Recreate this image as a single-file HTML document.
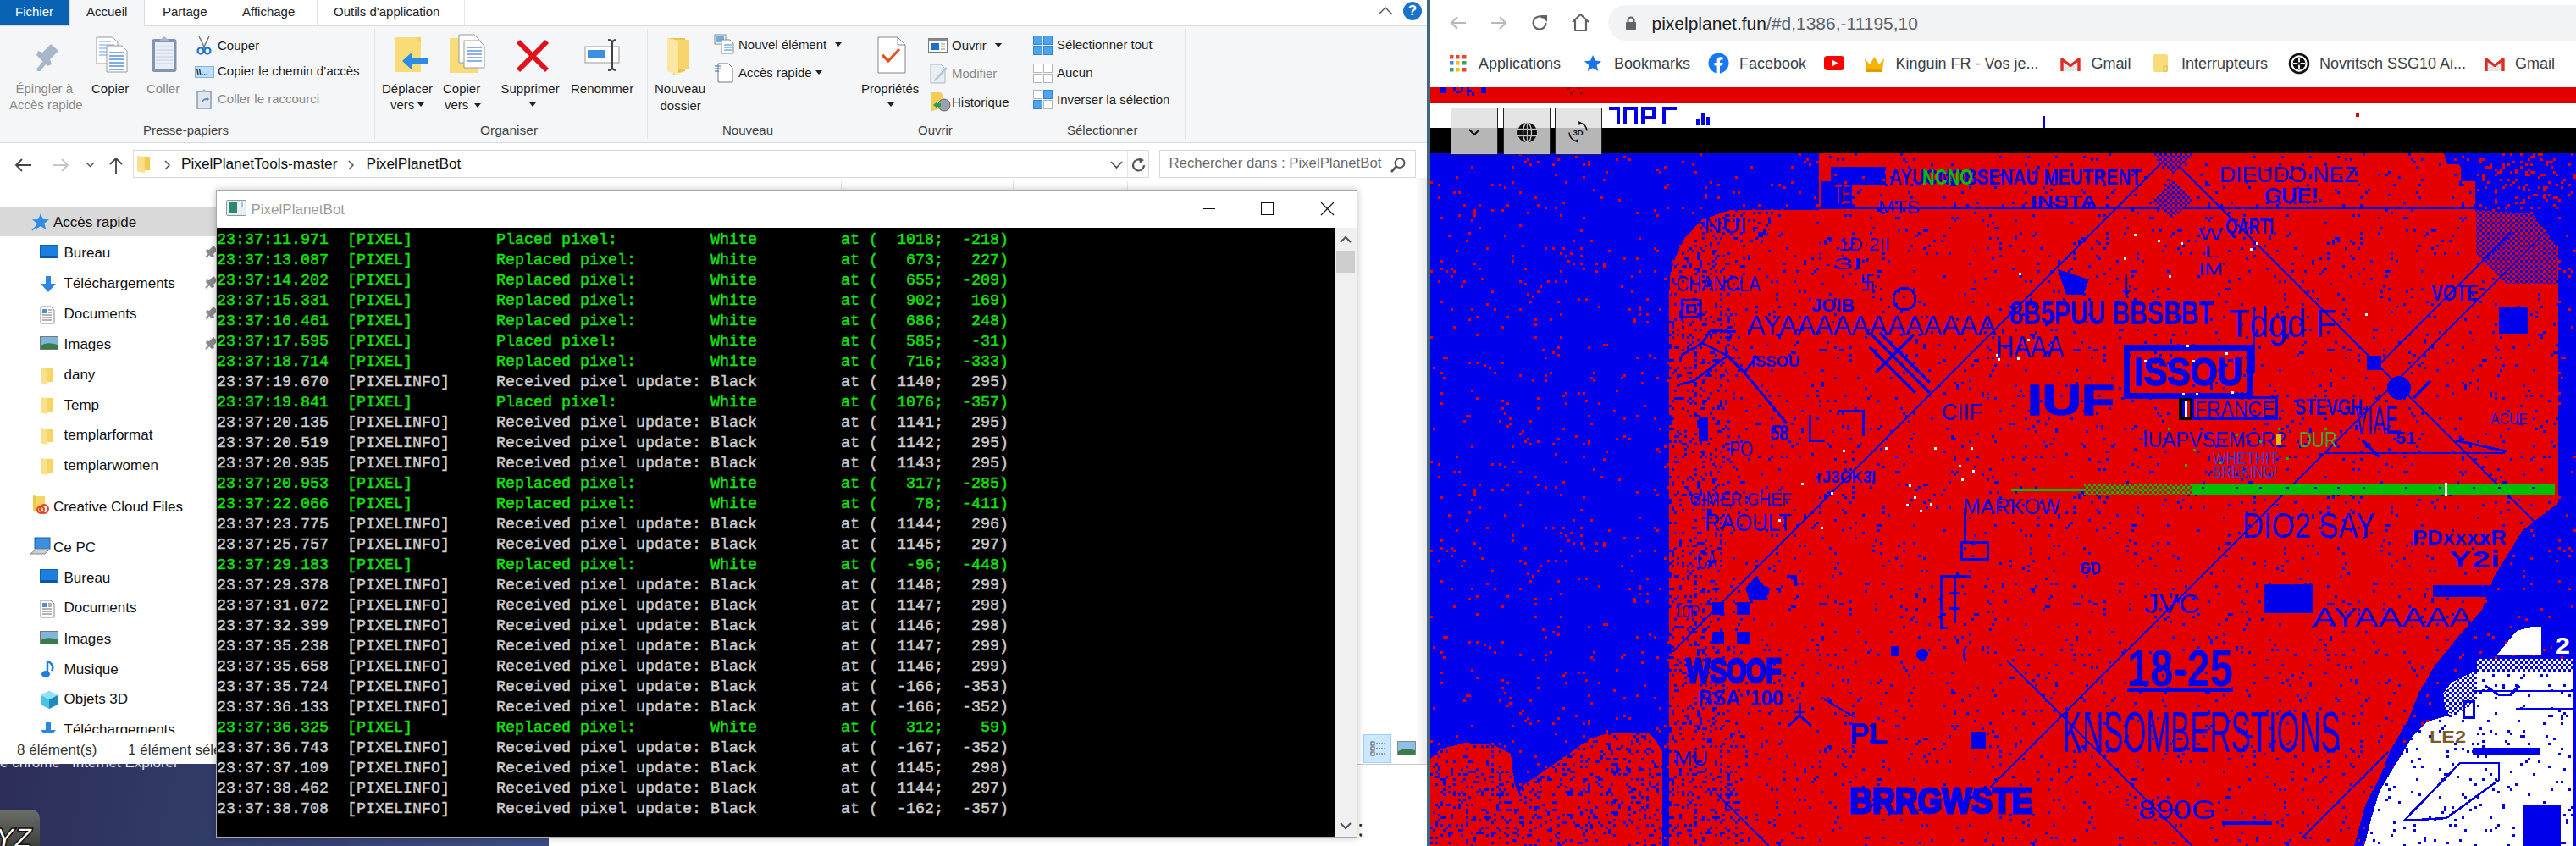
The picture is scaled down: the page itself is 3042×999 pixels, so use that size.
<!DOCTYPE html><html><head><meta charset="utf-8"><style>
html,body{margin:0;padding:0}
body{width:3042px;height:999px;position:relative;overflow:hidden;background:#1c2b48;font-family:"Liberation Sans",sans-serif}
.a{position:absolute}
.t{position:absolute;white-space:nowrap;line-height:1}
#con{position:absolute;left:256px;top:269px;width:1320px;height:719px;background:#000;font-family:"Liberation Mono",monospace;font-size:18.33px;line-height:24px;white-space:pre;padding-top:3px;box-sizing:border-box;overflow:hidden}
#con .g{color:#13e50e;-webkit-text-stroke:0.45px #13e50e}
#con .w{color:#cccccc;-webkit-text-stroke:0.45px #cccccc}
</style></head><body>

<div class="a" style="left:0;top:880px;width:700px;height:119px;background:linear-gradient(100deg,#2c2e58,#333f6c 45%,#3a4a7c 85%,#3b4c80)"></div>
<div class="t" style="left:0.0px;top:891.6px;font-size:17px;color:#dfe3ea;">e chrome&#160;&#160;&#160;Internet Explorer</div>
<div class="a" style="left:0;top:0;width:1685px;height:902px;background:#fff"></div>
<div class="a" style="left:0;top:0;width:82px;height:30px;background:#0a62b4"></div>
<div class="t" style="left:18.0px;top:5.9px;font-size:15px;color:#fff;">Fichier</div>
<div class="a" style="left:82px;top:0;width:88px;height:31px;background:#f5f6f7;border-right:1px solid #dadbdc"></div>
<div class="t" style="left:102.0px;top:5.9px;font-size:15px;color:#222;">Accueil</div>
<div class="t" style="left:192.0px;top:5.9px;font-size:15px;color:#222;">Partage</div>
<div class="t" style="left:286.0px;top:5.9px;font-size:15px;color:#222;">Affichage</div>
<div class="a" style="left:374px;top:0;width:1px;height:29px;background:#e4e4e4"></div>
<div class="t" style="left:394.0px;top:5.9px;font-size:15px;color:#222;">Outils d'application</div>
<div class="a" style="left:548px;top:0;width:1px;height:29px;background:#e4e4e4"></div>
<div class="a" style="left:0;top:30px;width:1685px;height:139px;background:#f5f6f7;border-top:1px solid #dadbdc;border-bottom:1px solid #dadbdc;box-sizing:border-box"></div>
<div class="a" style="left:82px;top:29px;width:88px;height:3px;background:#f5f6f7"></div>
<div class="a" style="left:82px;top:0;width:1px;height:31px;background:#dadbdc"></div>
<svg class="a" style="left:1626px;top:6px" width="20" height="14"><polyline points="2,11 10,3 18,11" fill="none" stroke="#555" stroke-width="1.4"/></svg>
<div class="a" style="left:1657px;top:2px;width:22px;height:22px;border-radius:50%;background:#1a73c9;color:#fff;font-size:17px;font-weight:bold;text-align:center;line-height:22px">?</div>
<div class="a" style="left:442px;top:34px;width:1px;height:130px;background:#e2e3e4"></div>
<div class="a" style="left:764px;top:34px;width:1px;height:130px;background:#e2e3e4"></div>
<div class="a" style="left:1008px;top:34px;width:1px;height:130px;background:#e2e3e4"></div>
<div class="a" style="left:1210px;top:34px;width:1px;height:130px;background:#e2e3e4"></div>
<div class="a" style="left:1399px;top:34px;width:1px;height:130px;background:#e2e3e4"></div>
<div class="a" style="left:584px;top:40px;width:1px;height:92px;background:#e2e3e4"></div>
<svg class="a" style="left:36px;top:48px" width="36" height="36"><path d="M10 34 L18 24" stroke="#a7b6c9" stroke-width="5" stroke-linecap="round"/><path d="M14 14 L24 4 L33 12 L23 22 L25 28 L20 30 L7 17 L9 12 Z" fill="#a7b6c9"/></svg>
<div class="t" style="left:18.5px;top:96.9px;font-size:15px;color:#8a8a8a;">Épingler à</div>
<div class="t" style="left:11.0px;top:116.4px;font-size:15px;color:#8a8a8a;">Accès rapide</div>
<svg class="a" style="left:113px;top:43px" width="38" height="44"><path d="M1 1 H20 L26 7 V32 H1 Z" fill="#fff" stroke="#9a9a9a"/><g stroke="#8fb4ea" stroke-width="1.3"><line x1="4" y1="6" x2="18" y2="6"/><line x1="4" y1="10" x2="22" y2="10"/><line x1="4" y1="14" x2="22" y2="14"/><line x1="4" y1="18" x2="22" y2="18"/><line x1="4" y1="22" x2="22" y2="22"/></g><path d="M13 11 H31 L37 17 V42 H13 Z" fill="#fff" stroke="#9a9a9a"/><g stroke="#3a7ee0" stroke-width="1.3"><line x1="16" y1="19" x2="34" y2="19"/><line x1="16" y1="23" x2="34" y2="23"/><line x1="16" y1="27" x2="34" y2="27"/><line x1="16" y1="31" x2="34" y2="31"/><line x1="16" y1="35" x2="34" y2="35"/><line x1="16" y1="39" x2="34" y2="39"/></g></svg>
<div class="t" style="left:108.0px;top:96.9px;font-size:15px;color:#1e1e1e;">Copier</div>
<svg class="a" style="left:178px;top:42px" width="32" height="44"><rect x="1.5" y="4" width="29" height="39" rx="3" fill="#8094b3"/><rect x="5" y="8" width="22" height="32" fill="#e8edf6"/><g stroke="#c6d0e0" stroke-width="1"><line x1="6" y1="13" x2="26" y2="13"/><line x1="6" y1="17" x2="26" y2="17"/><line x1="6" y1="21" x2="26" y2="21"/><line x1="6" y1="25" x2="26" y2="25"/><line x1="6" y1="29" x2="26" y2="29"/><line x1="6" y1="33" x2="26" y2="33"/></g><path d="M9 7 L16 1 L23 7 Z" fill="#a9b7cc"/></svg>
<div class="t" style="left:173.0px;top:96.9px;font-size:15px;color:#8a8a8a;">Coller</div>
<svg class="a" style="left:231px;top:42px" width="20" height="24"><path d="M4 1 L11 15 M16 1 L9 15" stroke="#777" stroke-width="1.5"/><circle cx="6" cy="18" r="3.5" fill="none" stroke="#1a74d0" stroke-width="2.2"/><circle cx="14" cy="18" r="3.5" fill="none" stroke="#1a74d0" stroke-width="2.2"/></svg>
<div class="t" style="left:257.0px;top:45.9px;font-size:15px;color:#1e1e1e;">Couper</div>
<svg class="a" style="left:230px;top:78px" width="23" height="15"><rect x="0.5" y="0.5" width="22" height="13" fill="#bfe0fb" stroke="#7fb2e5"/><text x="2" y="11" font-family="Liberation Sans" font-size="10" font-weight="bold" fill="#111">\\...</text></svg>
<div class="t" style="left:257.0px;top:76.4px;font-size:15px;color:#1e1e1e;">Copier le chemin d’accès</div>
<svg class="a" style="left:232px;top:105px" width="18" height="24"><rect x="1" y="3" width="16" height="20" fill="#dfe6f0" stroke="#8a9ab0" stroke-width="1.5"/><path d="M5 4 L9 0 L13 4Z" fill="#a9b7cc"/><path d="M6 18 Q6 11 12 11 L12 9 L15 12 L12 15 L12 13 Q8 13 6 18Z" fill="#6b89b5"/></svg>
<div class="t" style="left:257.0px;top:108.9px;font-size:15px;color:#8a8a8a;">Coller le raccourci</div>
<div class="t" style="left:169.0px;top:146.4px;font-size:15px;color:#444;">Presse-papiers</div>
<svg class="a" style="left:465px;top:43px" width="42" height="44"><path d="M1 1 H22 V12 L32 6 V42 H1 Z" fill="#f8d775"/><rect x="1" y="1" width="31" height="41" fill="#f5cf5d"/><path d="M1 1 H25 L32 8 V42 H1Z" fill="#f9dc7a"/><path d="M40 25 H22 V18 L10 29 L22 40 V33 H40 Z" fill="#2b8be6"/></svg>
<div class="t" style="left:451.0px;top:96.9px;font-size:15px;color:#1e1e1e;">Déplacer</div>
<div class="t" style="left:461.0px;top:116.4px;font-size:15px;color:#1e1e1e;">vers</div>
<svg class="a" style="left:493px;top:121px" width="9" height="6"><path d="M0 0 H8 L4 5Z" fill="#222"/></svg>
<svg class="a" style="left:530px;top:40px" width="44" height="46"><path d="M1 5 H32 V46 H1Z" fill="#f6d36a"/><path d="M1 5 H34 V46 H1Z" fill="#f9dc7a"/><path d="M12 1 H30 L36 7 V34 H12Z" fill="#fff" stroke="#9a9a9a"/><path d="M18 8 H36 L42 14 V40 H18Z" fill="#fff" stroke="#9a9a9a"/><g stroke="#3a7ee0" stroke-width="1.2"><line x1="21" y1="16" x2="39" y2="16"/><line x1="21" y1="20" x2="39" y2="20"/><line x1="21" y1="24" x2="39" y2="24"/><line x1="21" y1="28" x2="39" y2="28"/><line x1="21" y1="32" x2="39" y2="32"/></g></svg>
<div class="t" style="left:523.0px;top:96.9px;font-size:15px;color:#1e1e1e;">Copier</div>
<div class="t" style="left:525.0px;top:116.4px;font-size:15px;color:#1e1e1e;">vers</div>
<svg class="a" style="left:560px;top:122px" width="9" height="6"><path d="M0 0 H8 L4 5Z" fill="#222"/></svg>
<svg class="a" style="left:609px;top:46px" width="40" height="40"><path d="M3 3 L37 37 M37 3 L3 37" stroke="#e0111b" stroke-width="6"/></svg>
<div class="t" style="left:591.5px;top:96.9px;font-size:15px;color:#1e1e1e;">Supprimer</div>
<svg class="a" style="left:625px;top:121px" width="9" height="6"><path d="M0 0 H8 L4 5Z" fill="#222"/></svg>
<svg class="a" style="left:690px;top:45px" width="46" height="40"><rect x="1" y="10" width="40" height="19" fill="#fff" stroke="#999"/><rect x="4" y="14" width="20" height="10" fill="#3d8fe0"/><path d="M28 2 Q33 2 33 6 V34 Q33 38 28 38 M38 2 Q33 2 33 6 M33 34 Q33 38 38 38" fill="none" stroke="#444" stroke-width="2"/></svg>
<div class="t" style="left:674.0px;top:96.9px;font-size:15px;color:#1e1e1e;">Renommer</div>
<div class="t" style="left:567.0px;top:146.0px;font-size:15.5px;color:#444;">Organiser</div>
<svg class="a" style="left:787px;top:44px" width="32" height="44"><path d="M1 1 H22 V40 L8 44 V5Z" fill="#f0c24a"/><path d="M1 1 L14 4 V44 L1 40Z" fill="#fbe29a"/><path d="M6 3 H27 V38 H6Z" fill="#f7d56b"/><path d="M1 1 L14 4 V44 L1 40Z" fill="#fbe6a6"/></svg>
<div class="t" style="left:773.0px;top:96.9px;font-size:15px;color:#1e1e1e;">Nouveau</div>
<div class="t" style="left:779.5px;top:117.4px;font-size:15px;color:#1e1e1e;">dossier</div>
<svg class="a" style="left:843px;top:40px" width="26" height="24"><rect x="1" y="1" width="13" height="11" fill="#fff" stroke="#888"/><rect x="3" y="3" width="9" height="7" fill="#6aaede"/><path d="M9 7 H19 L23 11 V23 H9Z" fill="#fff" stroke="#888"/><g stroke="#3a7ee0"><line x1="12" y1="13" x2="21" y2="13"/><line x1="12" y1="16" x2="21" y2="16"/><line x1="12" y1="19" x2="21" y2="19"/></g></svg>
<div class="t" style="left:872.0px;top:45.4px;font-size:15px;color:#1e1e1e;">Nouvel élément</div>
<svg class="a" style="left:986px;top:50px" width="9" height="6"><path d="M0 0 H8 L4 5Z" fill="#222"/></svg>
<svg class="a" style="left:843px;top:74px" width="24" height="24"><path d="M5 1 H17 L22 6 V23 H5Z" fill="#fff" stroke="#777"/><path d="M1 4 H8 M1 7 H8 M1 10 H6" stroke="#2a6fc4" stroke-width="1.2"/></svg>
<div class="t" style="left:872.0px;top:77.9px;font-size:15px;color:#1e1e1e;">Accès rapide</div>
<svg class="a" style="left:963px;top:83px" width="9" height="6"><path d="M0 0 H8 L4 5Z" fill="#222"/></svg>
<div class="t" style="left:853.0px;top:146.4px;font-size:15px;color:#444;">Nouveau</div>
<svg class="a" style="left:1036px;top:43px" width="34" height="44"><path d="M1 1 H24 L33 10 V43 H1Z" fill="#fff" stroke="#888"/><path d="M24 1 V10 H33" fill="none" stroke="#888"/><path d="M6 22 L13 29 L26 15" fill="none" stroke="#e8501f" stroke-width="3.2"/></svg>
<div class="t" style="left:1017.0px;top:96.9px;font-size:15px;color:#1e1e1e;">Propriétés</div>
<svg class="a" style="left:1048px;top:121px" width="9" height="6"><path d="M0 0 H8 L4 5Z" fill="#222"/></svg>
<svg class="a" style="left:1096px;top:45px" width="24" height="18"><rect x="0.5" y="0.5" width="22" height="16" fill="#fff" stroke="#777"/><rect x="0.5" y="0.5" width="22" height="3" fill="#888"/><rect x="4" y="6" width="9" height="8" fill="#1a6fd0"/><g stroke="#888"><line x1="15" y1="7" x2="20" y2="7"/><line x1="15" y1="10" x2="20" y2="10"/><line x1="15" y1="13" x2="20" y2="13"/></g></svg>
<div class="t" style="left:1124.0px;top:46.4px;font-size:15px;color:#1e1e1e;">Ouvrir</div>
<svg class="a" style="left:1175px;top:51px" width="9" height="6"><path d="M0 0 H8 L4 5Z" fill="#222"/></svg>
<svg class="a" style="left:1098px;top:75px" width="22" height="24"><path d="M1 1 H13 L18 6 V23 H1Z" fill="#e9eef5" stroke="#aab4c2"/><path d="M6 18 L19 4 L21 6 L8 20 L5 21Z" fill="#b8c6da"/></svg>
<div class="t" style="left:1124.0px;top:79.4px;font-size:15px;color:#8a8a8a;">Modifier</div>
<svg class="a" style="left:1099px;top:108px" width="24" height="24"><path d="M1 1 H12 L14 4 V20 L1 23Z" fill="#f3cc5a"/><circle cx="16" cy="16" r="7" fill="#9aa3ad" stroke="#666"/><path d="M3 16 L8 12 V14 H12 V18 H8 V20Z" fill="#1fa34a"/></svg>
<div class="t" style="left:1124.0px;top:113.4px;font-size:15px;color:#1e1e1e;">Historique</div>
<div class="t" style="left:1084.0px;top:146.4px;font-size:15px;color:#444;">Ouvrir</div>
<svg class="a" style="left:1220px;top:42px" width="23" height="23"><rect x="0.5" y="0.5" width="10" height="10" fill="#4ea5ee" stroke="#2f86d6"/><rect x="12.5" y="0.5" width="10" height="10" fill="#4ea5ee" stroke="#2f86d6"/><rect x="0.5" y="12.5" width="10" height="10" fill="#4ea5ee" stroke="#2f86d6"/><rect x="12.5" y="12.5" width="10" height="10" fill="#4ea5ee" stroke="#2f86d6"/></svg>
<div class="t" style="left:1248.0px;top:45.4px;font-size:15px;color:#1e1e1e;">Sélectionner tout</div>
<svg class="a" style="left:1220px;top:75px" width="23" height="23"><rect x="0.5" y="0.5" width="10" height="10" fill="#fff" stroke="#b5b5b5"/><rect x="12.5" y="0.5" width="10" height="10" fill="#fff" stroke="#b5b5b5"/><rect x="0.5" y="12.5" width="10" height="10" fill="#fff" stroke="#b5b5b5"/><rect x="12.5" y="12.5" width="10" height="10" fill="#fff" stroke="#b5b5b5"/></svg>
<div class="t" style="left:1248.0px;top:77.9px;font-size:15px;color:#1e1e1e;">Aucun</div>
<svg class="a" style="left:1220px;top:106px" width="23" height="23"><rect x="0.5" y="0.5" width="10" height="10" fill="#fff" stroke="#b5b5b5"/><rect x="12.5" y="0.5" width="10" height="10" fill="#4ea5ee" stroke="#2f86d6"/><rect x="0.5" y="12.5" width="10" height="10" fill="#4ea5ee" stroke="#2f86d6"/><rect x="12.5" y="12.5" width="10" height="10" fill="#fff" stroke="#b5b5b5"/></svg>
<div class="t" style="left:1248.0px;top:109.9px;font-size:15px;color:#1e1e1e;">Inverser la sélection</div>
<div class="t" style="left:1260.0px;top:146.4px;font-size:15px;color:#444;">Sélectionner</div>
<svg class="a" style="left:16px;top:185px" width="22" height="20"><path d="M21 10 H3 M10 3 L3 10 L10 17" fill="none" stroke="#444" stroke-width="1.8"/></svg>
<svg class="a" style="left:61px;top:185px" width="22" height="20"><path d="M1 10 H19 M12 3 L19 10 L12 17" fill="none" stroke="#c5c5c5" stroke-width="1.8"/></svg>
<svg class="a" style="left:101px;top:191px" width="11" height="8"><path d="M1 1 L5.5 5.5 L10 1" fill="none" stroke="#555" stroke-width="1.5"/></svg>
<svg class="a" style="left:127px;top:184px" width="20" height="22"><path d="M10 21 V3 M3 10 L10 3 L17 10" fill="none" stroke="#444" stroke-width="1.8"/></svg>
<div class="a" style="left:157px;top:177px;width:1200px;height:33px;border:1px solid #d9d9d9;box-sizing:border-box;background:#fff"></div>
<svg class="a" style="left:161px;top:183px" width="18" height="22"><path d="M1 1 L10 3 V21 L1 19Z" fill="#f5cf5a"/><path d="M3 2 H16 V18 H3Z" fill="#f3c94f"/><path d="M1 1 L10 3 V21 L1 19Z" fill="#fbe08c"/></svg>
<svg class="a" style="left:193px;top:189px" width="9" height="12"><path d="M2 1 L7 6 L2 11" fill="none" stroke="#555" stroke-width="1.5"/></svg>
<div class="t" style="left:214.0px;top:184.9px;font-size:17.2px;color:#111;">PixelPlanetTools-master</div>
<svg class="a" style="left:410px;top:189px" width="9" height="12"><path d="M2 1 L7 6 L2 11" fill="none" stroke="#555" stroke-width="1.5"/></svg>
<div class="t" style="left:432.5px;top:184.9px;font-size:17.2px;color:#111;">PixelPlanetBot</div>
<svg class="a" style="left:1311px;top:190px" width="15" height="10"><path d="M1 1 L7.5 8 L14 1" fill="none" stroke="#555" stroke-width="1.8"/></svg>
<div class="a" style="left:1331px;top:178px;width:1px;height:31px;background:#e5e5e5"></div>
<svg class="a" style="left:1335px;top:185px" width="20" height="20"><path d="M16 10 A6.5 6.5 0 1 1 13 4.5" fill="none" stroke="#555" stroke-width="2.2"/><path d="M10 1 L16 4 L11 8Z" fill="#555"/></svg>
<div class="a" style="left:1369px;top:177px;width:303px;height:33px;border:1px solid #d9d9d9;box-sizing:border-box;background:#fff"></div>
<div class="t" style="left:1380.5px;top:185.3px;font-size:16.8px;color:#6d6d6d;">Rechercher dans : PixelPlanetBot</div>
<svg class="a" style="left:1641px;top:185px" width="20" height="20"><circle cx="12" cy="7.5" r="5.5" fill="none" stroke="#555" stroke-width="2"/><path d="M8 11.5 L2 18" stroke="#555" stroke-width="2.6"/></svg>
<div class="a" style="left:993px;top:214px;width:1px;height:12px;background:#e5e5e5"></div>
<div class="a" style="left:1196px;top:214px;width:1px;height:12px;background:#e5e5e5"></div>
<div class="a" style="left:1331px;top:214px;width:1px;height:12px;background:#e5e5e5"></div>
<div class="a" style="left:0;top:244px;width:256px;height:35px;background:#d9d9d9"></div>
<svg class="a" style="left:37px;top:251px" width="22" height="22"><path d="M11 1 L13.8 8 L21 8.3 L15.3 12.8 L17.3 20 L11 16 L4.7 20 L6.7 12.8 L1 8.3 L8.2 8Z" fill="#2e8de6"/><path d="M1 21 L7 15" stroke="#2e8de6" stroke-width="1.5"/></svg>
<div class="t" style="left:63.0px;top:254.1px;font-size:17px;color:#111;">Accès rapide</div>
<svg class="a" style="left:47px;top:289px" width="22" height="18"><rect x="0.5" y="0.5" width="21" height="15" fill="#1b7fe0" stroke="#0e5fb0"/><rect x="2" y="13" width="18" height="3" fill="#0b57a6"/></svg>
<div class="t" style="left:75.5px;top:290.1px;font-size:17px;color:#111;">Bureau</div>
<svg class="a" style="left:241px;top:290px" width="16" height="16"><path d="M2 14 L7 9" stroke="#8a8a8a" stroke-width="2"/><path d="M6 5 L11 0 L16 5 L11 10 L12 13 L9 14 L2 7 L3 4Z" fill="#8a8a8a"/></svg>
<svg class="a" style="left:47px;top:325px" width="20" height="22"><path d="M7 1 H13 V10 H19 L10 20 L1 10 H7Z" fill="#2a86e3"/></svg>
<div class="t" style="left:75.5px;top:326.1px;font-size:17px;color:#111;">Téléchargements</div>
<svg class="a" style="left:241px;top:326px" width="16" height="16"><path d="M2 14 L7 9" stroke="#8a8a8a" stroke-width="2"/><path d="M6 5 L11 0 L16 5 L11 10 L12 13 L9 14 L2 7 L3 4Z" fill="#8a8a8a"/></svg>
<svg class="a" style="left:47px;top:361px" width="18" height="22"><path d="M1 1 H13 L17 5 V21 H1Z" fill="#fff" stroke="#888"/><rect x="3" y="4" width="6" height="5" fill="#4a8fd6"/><g stroke="#666"><line x1="10" y1="5" x2="14" y2="5"/><line x1="10" y1="8" x2="14" y2="8"/><line x1="3" y1="11" x2="14" y2="11"/><line x1="3" y1="14" x2="14" y2="14"/><line x1="3" y1="17" x2="14" y2="17"/></g></svg>
<div class="t" style="left:75.5px;top:362.1px;font-size:17px;color:#111;">Documents</div>
<svg class="a" style="left:241px;top:362px" width="16" height="16"><path d="M2 14 L7 9" stroke="#8a8a8a" stroke-width="2"/><path d="M6 5 L11 0 L16 5 L11 10 L12 13 L9 14 L2 7 L3 4Z" fill="#8a8a8a"/></svg>
<svg class="a" style="left:47px;top:397px" width="22" height="16"><rect x="0.5" y="0.5" width="21" height="15" fill="#7fb6de" stroke="#777"/><path d="M1 11 Q8 6 21 10 V15 H1Z" fill="#3d7a4a"/></svg>
<div class="t" style="left:75.5px;top:398.1px;font-size:17px;color:#111;">Images</div>
<svg class="a" style="left:241px;top:398px" width="16" height="16"><path d="M2 14 L7 9" stroke="#8a8a8a" stroke-width="2"/><path d="M6 5 L11 0 L16 5 L11 10 L12 13 L9 14 L2 7 L3 4Z" fill="#8a8a8a"/></svg>
<svg class="a" style="left:47px;top:433px" width="16" height="22"><path d="M1 1 L9 3 V21 L1 19Z" fill="#f2c64a"/><path d="M4 2 H15 V18 H4Z" fill="#f7d565"/><path d="M1 1 L9 3 V21 L1 19Z" fill="#fbe08c"/></svg>
<div class="t" style="left:75.5px;top:434.1px;font-size:17px;color:#111;">dany</div>
<svg class="a" style="left:47px;top:468px" width="16" height="22"><path d="M1 1 L9 3 V21 L1 19Z" fill="#f2c64a"/><path d="M4 2 H15 V18 H4Z" fill="#f7d565"/><path d="M1 1 L9 3 V21 L1 19Z" fill="#fbe08c"/></svg>
<div class="t" style="left:75.5px;top:469.6px;font-size:17px;color:#111;">Temp</div>
<svg class="a" style="left:47px;top:504px" width="16" height="22"><path d="M1 1 L9 3 V21 L1 19Z" fill="#f2c64a"/><path d="M4 2 H15 V18 H4Z" fill="#f7d565"/><path d="M1 1 L9 3 V21 L1 19Z" fill="#fbe08c"/></svg>
<div class="t" style="left:75.5px;top:505.1px;font-size:17px;color:#111;">templarformat</div>
<svg class="a" style="left:47px;top:540px" width="16" height="22"><path d="M1 1 L9 3 V21 L1 19Z" fill="#f2c64a"/><path d="M4 2 H15 V18 H4Z" fill="#f7d565"/><path d="M1 1 L9 3 V21 L1 19Z" fill="#fbe08c"/></svg>
<div class="t" style="left:75.5px;top:541.1px;font-size:17px;color:#111;">templarwomen</div>
<svg class="a" style="left:38px;top:584px" width="24" height="24"><path d="M1 1 L10 3 V21 L1 19Z" fill="#f2c64a"/><path d="M4 2 H15 V18 H4Z" fill="#f7d565"/><circle cx="14" cy="17" r="5" fill="none" stroke="#e0412a" stroke-width="2"/><circle cx="10" cy="18" r="4" fill="none" stroke="#e0412a" stroke-width="2"/></svg>
<div class="t" style="left:63.0px;top:590.1px;font-size:17px;color:#111;">Creative Cloud Files</div>
<svg class="a" style="left:35px;top:634px" width="26" height="24"><rect x="6" y="1" width="18" height="13" fill="#3a8fe3" stroke="#1f5f9e"/><path d="M1 20 L8 14 H24 L18 20Z" fill="#c9ced6" stroke="#888"/></svg>
<div class="t" style="left:63.0px;top:638.1px;font-size:17px;color:#111;">Ce PC</div>
<svg class="a" style="left:47px;top:672px" width="22" height="18"><rect x="0.5" y="0.5" width="21" height="15" fill="#1b7fe0" stroke="#0e5fb0"/><rect x="2" y="13" width="18" height="3" fill="#0b57a6"/></svg>
<div class="t" style="left:75.5px;top:673.6px;font-size:17px;color:#111;">Bureau</div>
<svg class="a" style="left:47px;top:708px" width="18" height="22"><path d="M1 1 H13 L17 5 V21 H1Z" fill="#fff" stroke="#888"/><rect x="3" y="4" width="6" height="5" fill="#4a8fd6"/><g stroke="#666"><line x1="10" y1="5" x2="14" y2="5"/><line x1="10" y1="8" x2="14" y2="8"/><line x1="3" y1="11" x2="14" y2="11"/><line x1="3" y1="14" x2="14" y2="14"/><line x1="3" y1="17" x2="14" y2="17"/></g></svg>
<div class="t" style="left:75.5px;top:709.1px;font-size:17px;color:#111;">Documents</div>
<svg class="a" style="left:47px;top:745px" width="22" height="16"><rect x="0.5" y="0.5" width="21" height="15" fill="#7fb6de" stroke="#777"/><path d="M1 11 Q8 6 21 10 V15 H1Z" fill="#3d7a4a"/></svg>
<div class="t" style="left:75.5px;top:746.1px;font-size:17px;color:#111;">Images</div>
<div class="t" style="left:75.5px;top:781.6px;font-size:17px;color:#111;">Musique</div>
<div class="t" style="left:75.5px;top:817.1px;font-size:17px;color:#111;">Objets 3D</div>
<svg class="a" style="left:47px;top:852px" width="20" height="22"><path d="M7 1 H13 V10 H19 L10 20 L1 10 H7Z" fill="#2a86e3"/></svg>
<div class="t" style="left:75.5px;top:853.1px;font-size:17px;color:#111;">Téléchargements</div>
<svg class="a" style="left:49px;top:780px" width="18" height="22"><path d="M7 1 V15" stroke="#1a7fe0" stroke-width="2.5"/><ellipse cx="5" cy="16" rx="5" ry="4" fill="#1a7fe0"/><path d="M8 1 Q16 6 12 12" fill="none" stroke="#1a7fe0" stroke-width="2.5"/></svg>
<svg class="a" style="left:47px;top:815px" width="22" height="24"><path d="M11 1 L21 6 V17 L11 22 L1 17 V6Z" fill="#46c5e6"/><path d="M11 11 L21 6 V17 L11 22Z" fill="#1d8ab8"/><path d="M11 11 L1 6 L11 1 L21 6Z" fill="#8fe0f5"/></svg>
<div class="a" style="left:0;top:866px;width:1685px;height:36px;background:#fff"></div>
<div class="t" style="left:20.0px;top:876.6px;font-size:17px;color:#333;">8 élément(s)</div>
<div class="a" style="left:133px;top:876px;width:1px;height:20px;background:#e0e0e0"></div>
<div class="t" style="left:151.0px;top:876.6px;font-size:17px;color:#333;">1 élément sélectionné</div>
<div class="a" style="left:1610px;top:867px;width:33px;height:34px;background:#cce8ff;border:1px solid #99d1ff;box-sizing:border-box"></div>
<svg class="a" style="left:1618px;top:875px" width="20" height="20"><g fill="none" stroke="#555"><rect x="1" y="1" width="4" height="4"/><rect x="1" y="7" width="4" height="4"/><rect x="1" y="13" width="4" height="4"/></g><g stroke="#555" stroke-dasharray="2,1"><line x1="7" y1="3" x2="19" y2="3"/><line x1="7" y1="9" x2="19" y2="9"/><line x1="7" y1="15" x2="19" y2="15"/></g></svg>
<svg class="a" style="left:1650px;top:875px" width="22" height="18"><rect x="0.5" y="0.5" width="21" height="16" fill="#8cc0e8" stroke="#888"/><path d="M1 12 Q9 7 21 11 V16 H1Z" fill="#3d7a4a"/></svg>
<div class="a" style="left:1671px;top:210px;width:14px;height:692px;background:linear-gradient(90deg,rgba(0,0,0,0),rgba(0,0,0,0.08))"></div>
<div class="a" style="left:1685px;top:0;width:4px;height:999px;background:#41687f"></div>
<div class="a" style="left:1602px;top:902px;width:83px;height:97px;background:#fff"></div>
<div class="t" style="left:1603.0px;top:964.5px;font-size:26px;color:#222;font-family:"Liberation Mono";font-weight:bold">;</div>
<div class="a" style="left:1602px;top:902px;width:83px;height:1px;background:#c8c8c8"></div>
<div class="a" style="left:648px;top:988px;width:1037px;height:11px;background:#fff"></div>
<div class="a" style="left:648px;top:988px;width:954px;height:11px;overflow:hidden"><div class="t" style="left:0;top:10px;font-family:Liberation Mono;font-weight:bold;font-size:19px;color:#222">&#160;&#160;&#160;&#160;&#160;&#160;&#160;&#160;at file&#160;&#160;is deleted from default folder if location is mapped</div></div>
<div class="a" style="left:0;top:956px;width:47px;height:43px;background:linear-gradient(180deg,#6a6e68,#3e403c);border-radius:0 10px 0 0"></div>
<div class="t" style="left:-6.0px;top:972.2px;font-size:34px;color:#fff;font-weight:bold;font-style:italic;-webkit-text-stroke:1.5px #111">YZ</div>
<div class="a" style="left:255px;top:224px;width:1348px;height:765px;background:#fff;border:1px solid #a9a9a9;box-sizing:border-box;box-shadow:0 0 8px rgba(0,0,0,0.25)"></div>
<svg class="a" style="left:267px;top:236px" width="24" height="19"><rect x="0.5" y="0.5" width="23" height="18" rx="1.5" fill="#e8eef3" stroke="#8a96a0"/><rect x="3" y="3" width="10" height="13" fill="#2e8a6a"/><rect x="15" y="3" width="6" height="6" fill="#fff"/><line x1="19" y1="3" x2="19" y2="9" stroke="#3a7ee0"/></svg>
<div class="t" style="left:296.5px;top:238.6px;font-size:17px;color:#9a9a9a;">PixelPlanetBot</div>
<div class="a" style="left:1421px;top:246px;width:14px;height:1px;background:#111"></div>
<div class="a" style="left:1489px;top:239px;width:15px;height:15px;border:1px solid #111;box-sizing:border-box"></div>
<svg class="a" style="left:1559px;top:238px" width="17" height="17"><path d="M1 1 L16 16 M16 1 L1 16" stroke="#111" stroke-width="1.1"/></svg>
<div id="con"><div class="g">23:37:11.971  [PIXEL]         Placed pixel:          White         at (  1018;  -218)</div><div class="g">23:37:13.087  [PIXEL]         Replaced pixel:        White         at (   673;   227)</div><div class="g">23:37:14.202  [PIXEL]         Replaced pixel:        White         at (   655;  -209)</div><div class="g">23:37:15.331  [PIXEL]         Replaced pixel:        White         at (   902;   169)</div><div class="g">23:37:16.461  [PIXEL]         Replaced pixel:        White         at (   686;   248)</div><div class="g">23:37:17.595  [PIXEL]         Placed pixel:          White         at (   585;   -31)</div><div class="g">23:37:18.714  [PIXEL]         Replaced pixel:        White         at (   716;  -333)</div><div class="w">23:37:19.670  [PIXELINFO]     Received pixel update: Black         at (  1140;   295)</div><div class="g">23:37:19.841  [PIXEL]         Placed pixel:          White         at (  1076;  -357)</div><div class="w">23:37:20.135  [PIXELINFO]     Received pixel update: Black         at (  1141;   295)</div><div class="w">23:37:20.519  [PIXELINFO]     Received pixel update: Black         at (  1142;   295)</div><div class="w">23:37:20.935  [PIXELINFO]     Received pixel update: Black         at (  1143;   295)</div><div class="g">23:37:20.953  [PIXEL]         Replaced pixel:        White         at (   317;  -285)</div><div class="g">23:37:22.066  [PIXEL]         Replaced pixel:        White         at (    78;  -411)</div><div class="w">23:37:23.775  [PIXELINFO]     Received pixel update: Black         at (  1144;   296)</div><div class="w">23:37:25.757  [PIXELINFO]     Received pixel update: Black         at (  1145;   297)</div><div class="g">23:37:29.183  [PIXEL]         Replaced pixel:        White         at (   -96;  -448)</div><div class="w">23:37:29.378  [PIXELINFO]     Received pixel update: Black         at (  1148;   299)</div><div class="w">23:37:31.072  [PIXELINFO]     Received pixel update: Black         at (  1147;   298)</div><div class="w">23:37:32.399  [PIXELINFO]     Received pixel update: Black         at (  1146;   298)</div><div class="w">23:37:35.238  [PIXELINFO]     Received pixel update: Black         at (  1147;   299)</div><div class="w">23:37:35.658  [PIXELINFO]     Received pixel update: Black         at (  1146;   299)</div><div class="w">23:37:35.724  [PIXELINFO]     Received pixel update: Black         at (  -166;  -353)</div><div class="w">23:37:36.133  [PIXELINFO]     Received pixel update: Black         at (  -166;  -352)</div><div class="g">23:37:36.325  [PIXEL]         Replaced pixel:        White         at (   312;    59)</div><div class="w">23:37:36.743  [PIXELINFO]     Received pixel update: Black         at (  -167;  -352)</div><div class="w">23:37:37.109  [PIXELINFO]     Received pixel update: Black         at (  1145;   298)</div><div class="w">23:37:38.462  [PIXELINFO]     Received pixel update: Black         at (  1144;   297)</div><div class="w">23:37:38.708  [PIXELINFO]     Received pixel update: Black         at (  -162;  -357)</div></div>
<div class="a" style="left:1576px;top:269px;width:26px;height:719px;background:#f0f0f0"></div>
<svg class="a" style="left:1582px;top:278px" width="14" height="10"><path d="M1 8 L7 2 L13 8" fill="none" stroke="#555" stroke-width="2"/></svg>
<div class="a" style="left:1578px;top:296px;width:22px;height:26px;background:#cdcdcd"></div>
<svg class="a" style="left:1582px;top:970px" width="14" height="10"><path d="M1 2 L7 8 L13 2" fill="none" stroke="#555" stroke-width="2"/></svg>
<div class="a" style="left:1689px;top:0;width:1353px;height:103px;background:#fff"></div><svg class="a" style="left:1711px;top:16px" width="22" height="22"><path d="M20 11 H3 M10 4 L3 11 L10 18" fill="none" stroke="#b8b8b8" stroke-width="2"/></svg><svg class="a" style="left:1759px;top:16px" width="22" height="22"><path d="M2 11 H19 M12 4 L19 11 L12 18" fill="none" stroke="#b8b8b8" stroke-width="2"/></svg><svg class="a" style="left:1807px;top:16px" width="22" height="22"><path d="M18.5 11 A7.5 7.5 0 1 1 15.5 5" fill="none" stroke="#5f6368" stroke-width="2.2"/><path d="M12 2 H20 V10Z" fill="#5f6368"/></svg><svg class="a" style="left:1855px;top:15px" width="23" height="23"><path d="M2 11 L11.5 2 L21 11 M5 9 V21 H18 V9" fill="none" stroke="#5f6368" stroke-width="2.2" stroke-linejoin="round"/></svg><div class="a" style="left:1899px;top:6px;width:1200px;height:42px;border-radius:21px;background:#f1f3f4"></div><svg class="a" style="left:1919px;top:19px" width="14" height="17"><path d="M3.5 7 V5 A3.5 3.5 0 0 1 10.5 5 V7" fill="none" stroke="#5f6368" stroke-width="2"/><rect x="1" y="7" width="12" height="9" rx="1" fill="#5f6368"/></svg><div class="t" style="left:1950.5px;top:17.0px;font-size:21px;color:#202124;"><span style="color:#202124">pixelplanet.fun</span><span style="color:#5f6368">/#d,1386,-11195,10</span></div><svg class="a" style="left:1711px;top:64px" width="21" height="21"><rect x="1" y="1" width="4.5" height="4.5" fill="#ea4335"/><rect x="8" y="1" width="4.5" height="4.5" fill="#ea4335"/><rect x="16" y="1" width="4.5" height="4.5" fill="#ea4335"/><rect x="1" y="8" width="4.5" height="4.5" fill="#4285f4"/><rect x="8" y="8" width="4.5" height="4.5" fill="#fbbc05"/><rect x="16" y="8" width="4.5" height="4.5" fill="#34a853"/><rect x="1" y="16" width="4.5" height="4.5" fill="#34a853"/><rect x="8" y="16" width="4.5" height="4.5" fill="#fbbc05"/><rect x="16" y="16" width="4.5" height="4.5" fill="#ea4335"/></svg><div class="t" style="left:1746.0px;top:66.2px;font-size:18px;color:#3c4043;">Applications</div><svg class="a" style="left:1870px;top:64px" width="22" height="21"><path d="M11 1 L13.9 7.6 L21 8.2 L15.6 12.9 L17.3 20 L11 16.2 L4.7 20 L6.4 12.9 L1 8.2 L8.1 7.6Z" fill="#1a73e8"/></svg><div class="t" style="left:1906.0px;top:66.2px;font-size:18px;color:#3c4043;">Bookmarks</div><svg class="a" style="left:2017px;top:62px" width="25" height="25"><circle cx="12.5" cy="12.5" r="12" fill="#1877f2"/><path d="M14 25 V15.5 H17 L17.5 12 H14 V10 Q14 8.5 15.5 8.5 H17.6 V5.5 Q16.5 5.3 15 5.3 Q10.6 5.3 10.6 9.8 V12 H7.5 V15.5 H10.6 V25Z" fill="#fff"/></svg><div class="t" style="left:2054.0px;top:66.2px;font-size:18px;color:#3c4043;">Facebook</div><svg class="a" style="left:2154px;top:66px" width="24" height="18"><rect x="0" y="0" width="24" height="17" rx="4" fill="#f00"/><path d="M9.5 4.5 L16.5 8.5 L9.5 12.5Z" fill="#fff"/></svg><svg class="a" style="left:2201px;top:65px" width="25" height="21"><path d="M1 4 L7 11 L12.5 2 L18 11 L24 4 L22 17 H3Z" fill="#f5b400"/><rect x="3" y="17" width="19" height="3" fill="#e39a00"/></svg><div class="t" style="left:2238.5px;top:66.2px;font-size:18px;color:#3c4043;">Kinguin FR - Vos je...</div><svg class="a" style="left:2433px;top:67px" width="24" height="18"><path d="M2 3 L12 10 L22 3 V17 H2Z" fill="#e6e6e6"/><path d="M2 17 V3 L12 10.5 L22 3 V17" fill="none" stroke="#d93025" stroke-width="3.4" stroke-linejoin="round"/></svg><div class="t" style="left:2469.5px;top:66.2px;font-size:18px;color:#3c4043;">Gmail</div><svg class="a" style="left:2542px;top:63px" width="20" height="23"><rect x="1" y="1" width="17" height="21" rx="2" fill="#f9dc7a"/><rect x="13" y="15" width="4" height="6" fill="none" stroke="#e0b84a"/></svg><div class="t" style="left:2576.0px;top:66.2px;font-size:18px;color:#3c4043;">Interrupteurs</div><svg class="a" style="left:2702px;top:62px" width="26" height="26"><circle cx="13" cy="13" r="11" fill="none" stroke="#111" stroke-width="2.6"/><circle cx="13" cy="13" r="7.5" fill="#111"/><path d="M13 13 L13 6 M13 13 L20 13 M13 13 L13 20 M13 13 L6 13" stroke="#fff" stroke-width="1.8"/><circle cx="13" cy="13" r="1.8" fill="#111"/></svg><div class="t" style="left:2739.0px;top:66.2px;font-size:18px;color:#3c4043;">Novritsch SSG10 Ai...</div><svg class="a" style="left:2934px;top:67px" width="24" height="18"><path d="M2 3 L12 10 L22 3 V17 H2Z" fill="#e6e6e6"/><path d="M2 17 V3 L12 10.5 L22 3 V17" fill="none" stroke="#d93025" stroke-width="3.4" stroke-linejoin="round"/></svg><div class="t" style="left:2970.0px;top:66.2px;font-size:18px;color:#3c4043;">Gmail</div><svg class="a" style="left:1689px;top:103px" width="1353" height="896" viewBox="1689 103 1353 896" shape-rendering="crispEdges"><defs><pattern id="pr" x="0" y="1" width="300" height="300" patternUnits="userSpaceOnUse"><rect width="300" height="300" fill="#e50000"/><path fill="#0000ea" d="M18 0h3v3h-3zM75 0h3v3h-3zM261 0h3v3h-3zM39 3h3v3h-3zM48 3h3v3h-3zM78 3h3v3h-3zM123 3h3v3h-3zM252 3h3v3h-3zM30 6h3v3h-3zM99 6h3v3h-3zM129 6h3v3h-3zM6 9h3v3h-3zM30 9h3v3h-3zM225 9h3v3h-3zM66 12h3v3h-3zM45 15h3v3h-3zM90 15h3v3h-3zM276 15h3v3h-3zM6 18h3v3h-3zM21 18h3v3h-3zM42 18h3v3h-3zM117 18h3v3h-3zM120 18h3v3h-3zM159 18h3v3h-3zM255 18h3v3h-3zM39 21h3v3h-3zM84 21h3v3h-3zM75 24h3v3h-3zM117 24h3v3h-3zM195 24h3v3h-3zM285 24h3v3h-3zM99 27h3v3h-3zM243 27h3v3h-3zM18 30h3v3h-3zM231 30h3v3h-3zM291 30h3v3h-3zM297 30h3v3h-3zM51 33h3v3h-3zM90 33h3v3h-3zM114 36h3v3h-3zM120 39h3v3h-3zM147 39h3v3h-3zM159 39h3v3h-3zM228 39h3v3h-3zM231 39h3v3h-3zM24 42h3v3h-3zM30 42h3v3h-3zM111 42h3v3h-3zM141 42h3v3h-3zM60 45h3v3h-3zM219 45h3v3h-3zM297 45h3v3h-3zM111 48h3v3h-3zM147 48h3v3h-3zM36 51h3v3h-3zM66 51h3v3h-3zM120 51h3v3h-3zM297 51h3v3h-3zM165 54h3v3h-3zM228 54h3v3h-3zM18 57h3v3h-3zM138 57h3v3h-3zM171 57h3v3h-3zM246 57h3v3h-3zM0 60h3v3h-3zM129 60h3v3h-3zM273 60h3v3h-3zM69 63h3v3h-3zM261 63h3v3h-3zM123 66h3v3h-3zM144 66h3v3h-3zM273 66h3v3h-3zM294 66h3v3h-3zM66 69h3v3h-3zM288 69h3v3h-3zM24 72h3v3h-3zM168 72h3v3h-3zM174 72h3v3h-3zM225 72h3v3h-3zM294 72h3v3h-3zM72 75h3v3h-3zM210 75h3v3h-3zM63 78h3v3h-3zM15 81h3v3h-3zM246 81h3v3h-3zM21 87h3v3h-3zM27 87h3v3h-3zM102 87h3v3h-3zM105 87h3v3h-3zM123 87h3v3h-3zM264 87h3v3h-3zM279 87h3v3h-3zM3 90h3v3h-3zM48 90h3v3h-3zM180 90h3v3h-3zM216 90h3v3h-3zM243 90h3v3h-3zM264 90h3v3h-3zM0 93h3v3h-3zM144 93h3v3h-3zM165 93h3v3h-3zM297 93h3v3h-3zM0 96h3v3h-3zM102 96h3v3h-3zM252 96h3v3h-3zM162 99h3v3h-3zM219 99h3v3h-3zM21 102h3v3h-3zM57 102h3v3h-3zM132 102h3v3h-3zM162 102h3v3h-3zM18 105h3v3h-3zM171 105h3v3h-3zM189 105h3v3h-3zM285 105h3v3h-3zM66 108h3v3h-3zM84 108h3v3h-3zM171 108h3v3h-3zM207 108h3v3h-3zM246 108h3v3h-3zM267 108h3v3h-3zM48 111h3v3h-3zM51 111h3v3h-3zM54 111h3v3h-3zM72 111h3v3h-3zM75 111h3v3h-3zM114 111h3v3h-3zM249 111h3v3h-3zM15 114h3v3h-3zM18 114h3v3h-3zM144 114h3v3h-3zM12 117h3v3h-3zM84 117h3v3h-3zM114 117h3v3h-3zM150 117h3v3h-3zM162 117h3v3h-3zM69 120h3v3h-3zM246 120h3v3h-3zM252 120h3v3h-3zM84 123h3v3h-3zM195 123h3v3h-3zM231 123h3v3h-3zM234 123h3v3h-3zM144 126h3v3h-3zM159 126h3v3h-3zM189 126h3v3h-3zM156 129h3v3h-3zM228 129h3v3h-3zM255 129h3v3h-3zM270 129h3v3h-3zM162 132h3v3h-3zM51 135h3v3h-3zM177 135h3v3h-3zM219 135h3v3h-3zM252 135h3v3h-3zM291 135h3v3h-3zM30 138h3v3h-3zM147 138h3v3h-3zM249 141h3v3h-3zM66 144h3v3h-3zM93 144h3v3h-3zM132 144h3v3h-3zM225 147h3v3h-3zM51 150h3v3h-3zM165 150h3v3h-3zM207 150h3v3h-3zM216 150h3v3h-3zM39 153h3v3h-3zM51 153h3v3h-3zM189 153h3v3h-3zM210 153h3v3h-3zM279 153h3v3h-3zM102 156h3v3h-3zM210 156h3v3h-3zM225 156h3v3h-3zM45 159h3v3h-3zM285 159h3v3h-3zM195 162h3v3h-3zM240 162h3v3h-3zM246 162h3v3h-3zM0 165h3v3h-3zM33 165h3v3h-3zM45 165h3v3h-3zM78 165h3v3h-3zM108 165h3v3h-3zM177 165h3v3h-3zM240 165h3v3h-3zM282 165h3v3h-3zM288 165h3v3h-3zM105 168h3v3h-3zM138 168h3v3h-3zM246 168h3v3h-3zM255 168h3v3h-3zM9 171h3v3h-3zM48 171h3v3h-3zM57 171h3v3h-3zM66 171h3v3h-3zM117 171h3v3h-3zM48 177h3v3h-3zM276 177h3v3h-3zM90 180h3v3h-3zM144 180h3v3h-3zM27 183h3v3h-3zM60 183h3v3h-3zM261 183h3v3h-3zM294 183h3v3h-3zM69 186h3v3h-3zM75 186h3v3h-3zM147 186h3v3h-3zM159 186h3v3h-3zM150 189h3v3h-3zM18 192h3v3h-3zM45 192h3v3h-3zM180 192h3v3h-3zM204 192h3v3h-3zM291 192h3v3h-3zM6 195h3v3h-3zM153 195h3v3h-3zM15 198h3v3h-3zM273 198h3v3h-3zM276 198h3v3h-3zM0 201h3v3h-3zM75 201h3v3h-3zM81 201h3v3h-3zM120 201h3v3h-3zM27 204h3v3h-3zM81 204h3v3h-3zM108 204h3v3h-3zM117 204h3v3h-3zM198 204h3v3h-3zM261 204h3v3h-3zM294 204h3v3h-3zM3 207h3v3h-3zM27 207h3v3h-3zM63 207h3v3h-3zM132 207h3v3h-3zM159 210h3v3h-3zM234 210h3v3h-3zM204 213h3v3h-3zM252 213h3v3h-3zM24 216h3v3h-3zM84 216h3v3h-3zM126 216h3v3h-3zM156 216h3v3h-3zM204 216h3v3h-3zM207 216h3v3h-3zM12 219h3v3h-3zM225 219h3v3h-3zM255 219h3v3h-3zM21 222h3v3h-3zM57 222h3v3h-3zM96 222h3v3h-3zM15 225h3v3h-3zM60 225h3v3h-3zM93 225h3v3h-3zM153 225h3v3h-3zM216 225h3v3h-3zM291 225h3v3h-3zM120 228h3v3h-3zM87 231h3v3h-3zM156 231h3v3h-3zM195 231h3v3h-3zM39 234h3v3h-3zM3 237h3v3h-3zM9 237h3v3h-3zM24 237h3v3h-3zM138 237h3v3h-3zM207 237h3v3h-3zM234 237h3v3h-3zM276 237h3v3h-3zM291 237h3v3h-3zM66 240h3v3h-3zM87 240h3v3h-3zM207 240h3v3h-3zM222 240h3v3h-3zM264 240h3v3h-3zM288 240h3v3h-3zM78 243h3v3h-3zM117 246h3v3h-3zM147 246h3v3h-3zM123 249h3v3h-3zM231 249h3v3h-3zM0 252h3v3h-3zM78 252h3v3h-3zM84 252h3v3h-3zM249 252h3v3h-3zM108 255h3v3h-3zM138 255h3v3h-3zM141 255h3v3h-3zM204 255h3v3h-3zM210 255h3v3h-3zM207 258h3v3h-3zM240 258h3v3h-3zM279 258h3v3h-3zM45 261h3v3h-3zM252 261h3v3h-3zM246 264h3v3h-3zM111 267h3v3h-3zM201 267h3v3h-3zM255 267h3v3h-3zM258 267h3v3h-3zM141 270h3v3h-3zM150 270h3v3h-3zM171 270h3v3h-3zM174 270h3v3h-3zM3 273h3v3h-3zM87 273h3v3h-3zM108 273h3v3h-3zM165 273h3v3h-3zM285 273h3v3h-3zM0 276h3v3h-3zM162 276h3v3h-3zM195 276h3v3h-3zM279 276h3v3h-3zM57 279h3v3h-3zM60 279h3v3h-3zM87 279h3v3h-3zM249 279h3v3h-3zM258 279h3v3h-3zM279 279h3v3h-3zM54 282h3v3h-3zM60 282h3v3h-3zM75 282h3v3h-3zM183 282h3v3h-3zM192 282h3v3h-3zM48 285h3v3h-3zM54 285h3v3h-3zM78 285h3v3h-3zM87 285h3v3h-3zM261 285h3v3h-3zM156 288h3v3h-3zM177 288h3v3h-3zM273 288h3v3h-3zM9 291h3v3h-3zM69 291h3v3h-3zM84 291h3v3h-3zM171 291h3v3h-3zM246 291h3v3h-3zM261 291h3v3h-3zM153 294h3v3h-3zM231 294h3v3h-3zM288 294h3v3h-3zM48 297h3v3h-3zM123 297h3v3h-3zM174 297h3v3h-3zM186 297h3v3h-3zM201 297h3v3h-3z"/></pattern><pattern id="pb" x="0" y="1" width="330" height="330" patternUnits="userSpaceOnUse"><rect width="330" height="330" fill="#0000ea"/><path fill="#e50000" d="M48 0h3v3h-3zM78 0h3v3h-3zM144 0h3v3h-3zM177 0h3v3h-3zM186 0h3v3h-3zM198 0h3v3h-3zM150 3h3v3h-3zM324 3h3v3h-3zM75 6h3v3h-3zM168 6h3v3h-3zM264 6h3v3h-3zM9 12h3v3h-3zM111 12h3v3h-3zM165 12h3v3h-3zM276 12h3v3h-3zM153 15h3v3h-3zM9 18h3v3h-3zM159 18h3v3h-3zM213 21h3v3h-3zM222 21h3v3h-3zM294 21h3v3h-3zM51 24h3v3h-3zM156 24h3v3h-3zM189 24h3v3h-3zM18 27h3v3h-3zM105 27h3v3h-3zM237 30h3v3h-3zM285 30h3v3h-3zM9 33h3v3h-3zM63 33h3v3h-3zM87 33h3v3h-3zM114 33h3v3h-3zM144 33h3v3h-3zM273 33h3v3h-3zM285 33h3v3h-3zM309 33h3v3h-3zM192 39h3v3h-3zM285 39h3v3h-3zM294 39h3v3h-3zM93 42h3v3h-3zM129 42h3v3h-3zM84 45h3v3h-3zM162 45h3v3h-3zM180 45h3v3h-3zM279 45h3v3h-3zM279 48h3v3h-3zM294 48h3v3h-3zM162 51h3v3h-3zM66 54h3v3h-3zM123 54h3v3h-3zM30 57h3v3h-3zM93 63h3v3h-3zM3 66h3v3h-3zM39 66h3v3h-3zM162 66h3v3h-3zM192 66h3v3h-3zM12 69h3v3h-3zM243 75h3v3h-3zM246 75h3v3h-3zM189 78h3v3h-3zM225 78h3v3h-3zM324 78h3v3h-3zM171 81h3v3h-3zM183 84h3v3h-3zM189 87h3v3h-3zM297 87h3v3h-3zM54 90h3v3h-3zM57 90h3v3h-3zM174 90h3v3h-3zM282 90h3v3h-3zM303 90h3v3h-3zM84 96h3v3h-3zM93 96h3v3h-3zM123 96h3v3h-3zM318 96h3v3h-3zM102 99h3v3h-3zM42 102h3v3h-3zM108 102h3v3h-3zM33 105h3v3h-3zM51 108h3v3h-3zM114 108h3v3h-3zM180 108h3v3h-3zM231 108h3v3h-3zM288 108h3v3h-3zM21 111h3v3h-3zM144 111h3v3h-3zM174 111h3v3h-3zM267 111h3v3h-3zM327 111h3v3h-3zM54 114h3v3h-3zM228 114h3v3h-3zM264 114h3v3h-3zM306 114h3v3h-3zM159 117h3v3h-3zM174 117h3v3h-3zM231 117h3v3h-3zM318 117h3v3h-3zM288 120h3v3h-3zM6 126h3v3h-3zM87 129h3v3h-3zM258 129h3v3h-3zM51 132h3v3h-3zM198 132h3v3h-3zM213 132h3v3h-3zM219 132h3v3h-3zM195 135h3v3h-3zM93 138h3v3h-3zM165 138h3v3h-3zM324 138h3v3h-3zM123 141h3v3h-3zM222 141h3v3h-3zM24 144h3v3h-3zM51 144h3v3h-3zM129 144h3v3h-3zM198 144h3v3h-3zM237 144h3v3h-3zM327 144h3v3h-3zM15 147h3v3h-3zM291 147h3v3h-3zM12 150h3v3h-3zM123 150h3v3h-3zM165 150h3v3h-3zM255 153h3v3h-3zM126 156h3v3h-3zM81 159h3v3h-3zM84 159h3v3h-3zM225 159h3v3h-3zM282 159h3v3h-3zM12 162h3v3h-3zM132 162h3v3h-3zM267 162h3v3h-3zM303 162h3v3h-3zM78 165h3v3h-3zM120 165h3v3h-3zM156 165h3v3h-3zM132 168h3v3h-3zM228 168h3v3h-3zM129 171h3v3h-3zM42 174h3v3h-3zM195 174h3v3h-3zM309 174h3v3h-3zM321 174h3v3h-3zM147 177h3v3h-3zM27 180h3v3h-3zM144 180h3v3h-3zM210 183h3v3h-3zM267 183h3v3h-3zM153 186h3v3h-3zM189 186h3v3h-3zM258 186h3v3h-3zM273 186h3v3h-3zM6 189h3v3h-3zM150 189h3v3h-3zM165 189h3v3h-3zM225 189h3v3h-3zM18 192h3v3h-3zM156 192h3v3h-3zM183 192h3v3h-3zM219 192h3v3h-3zM225 192h3v3h-3zM87 195h3v3h-3zM135 195h3v3h-3zM315 195h3v3h-3zM306 198h3v3h-3zM21 201h3v3h-3zM246 201h3v3h-3zM309 201h3v3h-3zM186 204h3v3h-3zM69 207h3v3h-3zM219 207h3v3h-3zM243 210h3v3h-3zM39 213h3v3h-3zM135 213h3v3h-3zM198 213h3v3h-3zM48 216h3v3h-3zM111 216h3v3h-3zM120 216h3v3h-3zM318 216h3v3h-3zM33 219h3v3h-3zM126 219h3v3h-3zM315 219h3v3h-3zM231 222h3v3h-3zM66 225h3v3h-3zM72 225h3v3h-3zM144 225h3v3h-3zM33 228h3v3h-3zM33 231h3v3h-3zM48 231h3v3h-3zM162 231h3v3h-3zM240 231h3v3h-3zM261 234h3v3h-3zM195 237h3v3h-3zM78 240h3v3h-3zM96 240h3v3h-3zM129 240h3v3h-3zM165 240h3v3h-3zM6 243h3v3h-3zM27 243h3v3h-3zM174 243h3v3h-3zM186 243h3v3h-3zM318 243h3v3h-3zM90 246h3v3h-3zM111 246h3v3h-3zM123 246h3v3h-3zM303 246h3v3h-3zM18 249h3v3h-3zM90 249h3v3h-3zM153 249h3v3h-3zM282 249h3v3h-3zM72 252h3v3h-3zM90 252h3v3h-3zM192 252h3v3h-3zM306 252h3v3h-3zM51 255h3v3h-3zM219 255h3v3h-3zM87 258h3v3h-3zM144 264h3v3h-3zM96 267h3v3h-3zM216 270h3v3h-3zM18 273h3v3h-3zM84 273h3v3h-3zM60 276h3v3h-3zM126 276h3v3h-3zM285 279h3v3h-3zM21 282h3v3h-3zM81 282h3v3h-3zM207 282h3v3h-3zM228 282h3v3h-3zM3 288h3v3h-3zM9 288h3v3h-3zM147 288h3v3h-3zM105 291h3v3h-3zM174 291h3v3h-3zM183 291h3v3h-3zM195 291h3v3h-3zM216 291h3v3h-3zM303 291h3v3h-3zM18 294h3v3h-3zM69 294h3v3h-3zM249 294h3v3h-3zM306 294h3v3h-3zM192 297h3v3h-3zM204 297h3v3h-3zM21 300h3v3h-3zM135 300h3v3h-3zM198 300h3v3h-3zM216 300h3v3h-3zM267 303h3v3h-3zM282 303h3v3h-3zM51 306h3v3h-3zM135 306h3v3h-3zM201 306h3v3h-3zM324 306h3v3h-3zM90 309h3v3h-3zM207 309h3v3h-3zM216 309h3v3h-3zM234 309h3v3h-3zM243 309h3v3h-3zM243 312h3v3h-3zM51 315h3v3h-3zM63 315h3v3h-3zM96 315h3v3h-3zM150 315h3v3h-3zM219 315h3v3h-3zM39 318h3v3h-3zM57 318h3v3h-3zM66 318h3v3h-3zM192 318h3v3h-3zM234 318h3v3h-3zM285 318h3v3h-3zM303 318h3v3h-3zM63 324h3v3h-3zM276 324h3v3h-3zM327 324h3v3h-3zM18 327h3v3h-3zM99 327h3v3h-3zM315 327h3v3h-3z"/></pattern><pattern id="pw" x="0" y="1" width="240" height="240" patternUnits="userSpaceOnUse"><rect width="240" height="240" fill="#ffffff"/><path fill="#0000ea" d="M12 0h3v3h-3zM120 0h3v3h-3zM147 0h3v3h-3zM156 0h3v3h-3zM27 3h3v3h-3zM60 3h3v3h-3zM132 3h3v3h-3zM228 3h3v3h-3zM18 6h3v3h-3zM99 6h3v3h-3zM138 6h3v3h-3zM150 6h3v3h-3zM234 6h3v3h-3zM150 9h3v3h-3zM186 9h3v3h-3zM12 12h3v3h-3zM18 12h3v3h-3zM69 12h3v3h-3zM210 12h3v3h-3zM66 15h3v3h-3zM87 15h3v3h-3zM126 15h3v3h-3zM138 15h3v3h-3zM198 15h3v3h-3zM30 18h3v3h-3zM54 18h3v3h-3zM60 18h3v3h-3zM186 18h3v3h-3zM210 18h3v3h-3zM159 21h3v3h-3zM87 24h3v3h-3zM117 24h3v3h-3zM126 24h3v3h-3zM132 24h3v3h-3zM183 24h3v3h-3zM222 27h3v3h-3zM24 30h3v3h-3zM162 30h3v3h-3zM222 30h3v3h-3zM234 30h3v3h-3zM9 33h3v3h-3zM111 33h3v3h-3zM126 33h3v3h-3zM144 33h3v3h-3zM147 33h3v3h-3zM168 33h3v3h-3zM216 33h3v3h-3zM42 36h3v3h-3zM81 36h3v3h-3zM198 36h3v3h-3zM6 39h3v3h-3zM33 39h3v3h-3zM129 39h3v3h-3zM15 42h3v3h-3zM45 42h3v3h-3zM105 42h3v3h-3zM198 42h3v3h-3zM60 45h3v3h-3zM81 45h3v3h-3zM84 45h3v3h-3zM123 48h3v3h-3zM207 48h3v3h-3zM69 51h3v3h-3zM102 51h3v3h-3zM144 51h3v3h-3zM210 51h3v3h-3zM21 54h3v3h-3zM51 54h3v3h-3zM141 54h3v3h-3zM72 57h3v3h-3zM99 57h3v3h-3zM183 57h3v3h-3zM39 60h3v3h-3zM195 60h3v3h-3zM213 60h3v3h-3zM12 63h3v3h-3zM36 63h3v3h-3zM147 63h3v3h-3zM156 66h3v3h-3zM219 66h3v3h-3zM237 66h3v3h-3zM15 69h3v3h-3zM210 69h3v3h-3zM21 72h3v3h-3zM189 72h3v3h-3zM63 75h3v3h-3zM81 75h3v3h-3zM99 75h3v3h-3zM120 75h3v3h-3zM126 75h3v3h-3zM96 78h3v3h-3zM162 78h3v3h-3zM177 78h3v3h-3zM216 78h3v3h-3zM21 81h3v3h-3zM51 81h3v3h-3zM216 81h3v3h-3zM222 81h3v3h-3zM15 87h3v3h-3zM66 87h3v3h-3zM75 87h3v3h-3zM90 87h3v3h-3zM129 87h3v3h-3zM147 87h3v3h-3zM174 87h3v3h-3zM225 87h3v3h-3zM21 90h3v3h-3zM27 90h3v3h-3zM75 90h3v3h-3zM180 90h3v3h-3zM183 90h3v3h-3zM237 90h3v3h-3zM30 93h3v3h-3zM51 93h3v3h-3zM57 93h3v3h-3zM60 93h3v3h-3zM132 93h3v3h-3zM156 93h3v3h-3zM213 93h3v3h-3zM0 96h3v3h-3zM48 96h3v3h-3zM144 96h3v3h-3zM6 99h3v3h-3zM105 99h3v3h-3zM153 99h3v3h-3zM222 99h3v3h-3zM0 102h3v3h-3zM6 102h3v3h-3zM66 102h3v3h-3zM24 105h3v3h-3zM33 108h3v3h-3zM195 108h3v3h-3zM228 108h3v3h-3zM33 111h3v3h-3zM45 111h3v3h-3zM99 111h3v3h-3zM96 114h3v3h-3zM132 114h3v3h-3zM195 114h3v3h-3zM21 117h3v3h-3zM141 117h3v3h-3zM66 120h3v3h-3zM147 120h3v3h-3zM12 123h3v3h-3zM129 123h3v3h-3zM132 123h3v3h-3zM144 123h3v3h-3zM150 123h3v3h-3zM144 126h3v3h-3zM192 126h3v3h-3zM210 126h3v3h-3zM216 126h3v3h-3zM0 129h3v3h-3zM27 129h3v3h-3zM57 129h3v3h-3zM93 129h3v3h-3zM171 129h3v3h-3zM123 132h3v3h-3zM144 132h3v3h-3zM6 135h3v3h-3zM204 135h3v3h-3zM3 138h3v3h-3zM48 138h3v3h-3zM171 138h3v3h-3zM0 141h3v3h-3zM60 141h3v3h-3zM81 141h3v3h-3zM99 141h3v3h-3zM168 141h3v3h-3zM183 141h3v3h-3zM210 141h3v3h-3zM216 141h3v3h-3zM45 144h3v3h-3zM51 144h3v3h-3zM66 144h3v3h-3zM84 144h3v3h-3zM96 147h3v3h-3zM99 147h3v3h-3zM126 147h3v3h-3zM228 147h3v3h-3zM135 150h3v3h-3zM207 150h3v3h-3zM51 153h3v3h-3zM78 153h3v3h-3zM177 153h3v3h-3zM18 156h3v3h-3zM39 156h3v3h-3zM45 156h3v3h-3zM81 156h3v3h-3zM105 156h3v3h-3zM129 156h3v3h-3zM51 159h3v3h-3zM168 159h3v3h-3zM198 159h3v3h-3zM18 162h3v3h-3zM27 162h3v3h-3zM144 162h3v3h-3zM165 162h3v3h-3zM201 162h3v3h-3zM213 162h3v3h-3zM9 165h3v3h-3zM33 165h3v3h-3zM39 165h3v3h-3zM93 165h3v3h-3zM201 165h3v3h-3zM87 168h3v3h-3zM117 168h3v3h-3zM141 168h3v3h-3zM195 168h3v3h-3zM9 171h3v3h-3zM45 171h3v3h-3zM54 171h3v3h-3zM153 171h3v3h-3zM105 174h3v3h-3zM216 174h3v3h-3zM102 177h3v3h-3zM117 177h3v3h-3zM207 177h3v3h-3zM15 180h3v3h-3zM96 180h3v3h-3zM129 183h3v3h-3zM210 183h3v3h-3zM219 183h3v3h-3zM0 186h3v3h-3zM54 186h3v3h-3zM147 186h3v3h-3zM84 189h3v3h-3zM168 189h3v3h-3zM6 192h3v3h-3zM9 192h3v3h-3zM60 192h3v3h-3zM111 192h3v3h-3zM21 195h3v3h-3zM3 198h3v3h-3zM6 198h3v3h-3zM36 198h3v3h-3zM51 198h3v3h-3zM66 198h3v3h-3zM213 198h3v3h-3zM138 201h3v3h-3zM144 201h3v3h-3zM42 204h3v3h-3zM90 204h3v3h-3zM177 204h3v3h-3zM81 207h3v3h-3zM186 207h3v3h-3zM63 210h3v3h-3zM84 210h3v3h-3zM132 210h3v3h-3zM153 210h3v3h-3zM180 210h3v3h-3zM69 213h3v3h-3zM159 213h3v3h-3zM207 213h3v3h-3zM27 216h3v3h-3zM105 216h3v3h-3zM216 216h3v3h-3zM0 219h3v3h-3zM30 219h3v3h-3zM45 219h3v3h-3zM180 219h3v3h-3zM177 222h3v3h-3zM123 225h3v3h-3zM192 225h3v3h-3zM48 228h3v3h-3zM75 228h3v3h-3zM159 228h3v3h-3zM6 231h3v3h-3zM15 231h3v3h-3zM42 231h3v3h-3zM75 231h3v3h-3zM126 231h3v3h-3zM129 231h3v3h-3zM156 231h3v3h-3zM6 234h3v3h-3zM36 234h3v3h-3zM153 234h3v3h-3zM168 234h3v3h-3zM3 237h3v3h-3zM15 237h3v3h-3zM114 237h3v3h-3zM141 237h3v3h-3zM207 237h3v3h-3z"/></pattern><pattern id="pc" x="0" y="1" width="6" height="6" patternUnits="userSpaceOnUse"><rect width="6" height="6" fill="#e50000"/><rect width="3" height="3" fill="#0000ea"/><rect x="3" y="3" width="3" height="3" fill="#0000ea"/></pattern><pattern id="pg" x="0" y="1" width="6" height="6" patternUnits="userSpaceOnUse"><rect width="6" height="6" fill="#e50000"/><rect width="3" height="3" fill="#02be01"/><rect x="3" y="3" width="3" height="3" fill="#02be01"/></pattern><pattern id="pwc" x="0" y="1" width="6" height="6" patternUnits="userSpaceOnUse"><rect width="6" height="6" fill="#ffffff"/><rect width="3" height="3" fill="#0000ea"/><rect x="3" y="3" width="3" height="3" fill="#0000ea"/></pattern><pattern id="pr2" x="0" y="1" width="270" height="270" patternUnits="userSpaceOnUse"><rect width="270" height="270" fill="#e50000"/><path fill="#0000ea" d="M30 0h3v3h-3zM36 0h3v3h-3zM45 0h3v3h-3zM60 0h3v3h-3zM63 0h3v3h-3zM69 0h3v3h-3zM78 0h3v3h-3zM129 0h3v3h-3zM150 0h3v3h-3zM168 0h3v3h-3zM180 0h3v3h-3zM192 0h3v3h-3zM198 0h3v3h-3zM201 0h3v3h-3zM222 0h3v3h-3zM228 0h3v3h-3zM264 0h3v3h-3zM15 3h3v3h-3zM18 3h3v3h-3zM51 3h3v3h-3zM87 3h3v3h-3zM90 3h3v3h-3zM120 3h3v3h-3zM144 3h3v3h-3zM153 3h3v3h-3zM165 3h3v3h-3zM186 3h3v3h-3zM189 3h3v3h-3zM192 3h3v3h-3zM204 3h3v3h-3zM222 3h3v3h-3zM12 6h3v3h-3zM42 6h3v3h-3zM48 6h3v3h-3zM75 6h3v3h-3zM132 6h3v3h-3zM186 6h3v3h-3zM189 6h3v3h-3zM195 6h3v3h-3zM210 6h3v3h-3zM213 6h3v3h-3zM219 6h3v3h-3zM228 6h3v3h-3zM231 6h3v3h-3zM264 6h3v3h-3zM33 9h3v3h-3zM42 9h3v3h-3zM120 9h3v3h-3zM135 9h3v3h-3zM141 9h3v3h-3zM156 9h3v3h-3zM159 9h3v3h-3zM183 9h3v3h-3zM249 9h3v3h-3zM3 12h3v3h-3zM24 12h3v3h-3zM51 12h3v3h-3zM57 12h3v3h-3zM78 12h3v3h-3zM84 12h3v3h-3zM111 12h3v3h-3zM165 12h3v3h-3zM177 12h3v3h-3zM189 12h3v3h-3zM198 12h3v3h-3zM213 12h3v3h-3zM231 12h3v3h-3zM234 12h3v3h-3zM237 12h3v3h-3zM249 12h3v3h-3zM267 12h3v3h-3zM0 15h3v3h-3zM27 15h3v3h-3zM57 15h3v3h-3zM129 15h3v3h-3zM138 15h3v3h-3zM189 15h3v3h-3zM204 15h3v3h-3zM213 15h3v3h-3zM243 15h3v3h-3zM252 15h3v3h-3zM258 15h3v3h-3zM3 18h3v3h-3zM39 18h3v3h-3zM45 18h3v3h-3zM48 18h3v3h-3zM63 18h3v3h-3zM72 18h3v3h-3zM111 18h3v3h-3zM123 18h3v3h-3zM129 18h3v3h-3zM168 18h3v3h-3zM216 18h3v3h-3zM219 18h3v3h-3zM231 18h3v3h-3zM237 18h3v3h-3zM240 18h3v3h-3zM0 21h3v3h-3zM3 21h3v3h-3zM54 21h3v3h-3zM60 21h3v3h-3zM63 21h3v3h-3zM81 21h3v3h-3zM90 21h3v3h-3zM105 21h3v3h-3zM117 21h3v3h-3zM204 21h3v3h-3zM225 21h3v3h-3zM234 21h3v3h-3zM237 21h3v3h-3zM246 21h3v3h-3zM252 21h3v3h-3zM75 24h3v3h-3zM102 24h3v3h-3zM108 24h3v3h-3zM120 24h3v3h-3zM132 24h3v3h-3zM135 24h3v3h-3zM204 24h3v3h-3zM234 24h3v3h-3zM252 24h3v3h-3zM255 24h3v3h-3zM12 27h3v3h-3zM18 27h3v3h-3zM30 27h3v3h-3zM39 27h3v3h-3zM69 27h3v3h-3zM84 27h3v3h-3zM96 27h3v3h-3zM114 27h3v3h-3zM132 27h3v3h-3zM150 27h3v3h-3zM213 27h3v3h-3zM216 27h3v3h-3zM219 27h3v3h-3zM240 27h3v3h-3zM246 27h3v3h-3zM249 27h3v3h-3zM255 27h3v3h-3zM15 30h3v3h-3zM36 30h3v3h-3zM48 30h3v3h-3zM66 30h3v3h-3zM84 30h3v3h-3zM114 30h3v3h-3zM138 30h3v3h-3zM144 30h3v3h-3zM174 30h3v3h-3zM201 30h3v3h-3zM204 30h3v3h-3zM237 30h3v3h-3zM246 30h3v3h-3zM3 33h3v3h-3zM9 33h3v3h-3zM75 33h3v3h-3zM99 33h3v3h-3zM102 33h3v3h-3zM114 33h3v3h-3zM135 33h3v3h-3zM168 33h3v3h-3zM174 33h3v3h-3zM183 33h3v3h-3zM195 33h3v3h-3zM213 33h3v3h-3zM216 33h3v3h-3zM12 36h3v3h-3zM15 36h3v3h-3zM33 36h3v3h-3zM45 36h3v3h-3zM102 36h3v3h-3zM117 36h3v3h-3zM132 36h3v3h-3zM159 36h3v3h-3zM255 36h3v3h-3zM3 39h3v3h-3zM6 39h3v3h-3zM24 39h3v3h-3zM42 39h3v3h-3zM48 39h3v3h-3zM66 39h3v3h-3zM78 39h3v3h-3zM90 39h3v3h-3zM105 39h3v3h-3zM117 39h3v3h-3zM126 39h3v3h-3zM135 39h3v3h-3zM147 39h3v3h-3zM150 39h3v3h-3zM192 39h3v3h-3zM201 39h3v3h-3zM9 42h3v3h-3zM21 42h3v3h-3zM45 42h3v3h-3zM63 42h3v3h-3zM72 42h3v3h-3zM87 42h3v3h-3zM96 42h3v3h-3zM99 42h3v3h-3zM105 42h3v3h-3zM117 42h3v3h-3zM132 42h3v3h-3zM165 42h3v3h-3zM168 42h3v3h-3zM213 42h3v3h-3zM222 42h3v3h-3zM237 42h3v3h-3zM255 42h3v3h-3zM264 42h3v3h-3zM9 45h3v3h-3zM18 45h3v3h-3zM24 45h3v3h-3zM42 45h3v3h-3zM111 45h3v3h-3zM114 45h3v3h-3zM129 45h3v3h-3zM144 45h3v3h-3zM204 45h3v3h-3zM243 45h3v3h-3zM246 45h3v3h-3zM249 45h3v3h-3zM252 45h3v3h-3zM258 45h3v3h-3zM9 48h3v3h-3zM66 48h3v3h-3zM81 48h3v3h-3zM93 48h3v3h-3zM114 48h3v3h-3zM120 48h3v3h-3zM123 48h3v3h-3zM135 48h3v3h-3zM141 48h3v3h-3zM189 48h3v3h-3zM195 48h3v3h-3zM207 48h3v3h-3zM213 48h3v3h-3zM219 48h3v3h-3zM240 48h3v3h-3zM243 48h3v3h-3zM252 48h3v3h-3zM12 51h3v3h-3zM48 51h3v3h-3zM54 51h3v3h-3zM57 51h3v3h-3zM72 51h3v3h-3zM81 51h3v3h-3zM111 51h3v3h-3zM129 51h3v3h-3zM168 51h3v3h-3zM192 51h3v3h-3zM195 51h3v3h-3zM204 51h3v3h-3zM234 51h3v3h-3zM9 54h3v3h-3zM42 54h3v3h-3zM75 54h3v3h-3zM93 54h3v3h-3zM120 54h3v3h-3zM153 54h3v3h-3zM186 54h3v3h-3zM219 54h3v3h-3zM225 54h3v3h-3zM228 54h3v3h-3zM240 54h3v3h-3zM258 54h3v3h-3zM15 57h3v3h-3zM39 57h3v3h-3zM48 57h3v3h-3zM51 57h3v3h-3zM84 57h3v3h-3zM153 57h3v3h-3zM183 57h3v3h-3zM210 57h3v3h-3zM216 57h3v3h-3zM240 57h3v3h-3zM18 60h3v3h-3zM42 60h3v3h-3zM51 60h3v3h-3zM78 60h3v3h-3zM84 60h3v3h-3zM96 60h3v3h-3zM108 60h3v3h-3zM120 60h3v3h-3zM126 60h3v3h-3zM129 60h3v3h-3zM147 60h3v3h-3zM165 60h3v3h-3zM171 60h3v3h-3zM195 60h3v3h-3zM198 60h3v3h-3zM210 60h3v3h-3zM216 60h3v3h-3zM219 60h3v3h-3zM234 60h3v3h-3zM240 60h3v3h-3zM246 60h3v3h-3zM36 63h3v3h-3zM42 63h3v3h-3zM57 63h3v3h-3zM78 63h3v3h-3zM87 63h3v3h-3zM126 63h3v3h-3zM129 63h3v3h-3zM156 63h3v3h-3zM180 63h3v3h-3zM186 63h3v3h-3zM201 63h3v3h-3zM213 63h3v3h-3zM231 63h3v3h-3zM252 63h3v3h-3zM261 63h3v3h-3zM264 63h3v3h-3zM6 66h3v3h-3zM9 66h3v3h-3zM36 66h3v3h-3zM45 66h3v3h-3zM72 66h3v3h-3zM144 66h3v3h-3zM183 66h3v3h-3zM192 66h3v3h-3zM207 66h3v3h-3zM219 66h3v3h-3zM237 66h3v3h-3zM9 69h3v3h-3zM24 69h3v3h-3zM78 69h3v3h-3zM120 69h3v3h-3zM129 69h3v3h-3zM135 69h3v3h-3zM141 69h3v3h-3zM153 69h3v3h-3zM159 69h3v3h-3zM162 69h3v3h-3zM183 69h3v3h-3zM213 69h3v3h-3zM228 69h3v3h-3zM258 69h3v3h-3zM9 72h3v3h-3zM18 72h3v3h-3zM21 72h3v3h-3zM30 72h3v3h-3zM33 72h3v3h-3zM54 72h3v3h-3zM57 72h3v3h-3zM78 72h3v3h-3zM111 72h3v3h-3zM168 72h3v3h-3zM201 72h3v3h-3zM234 72h3v3h-3zM243 72h3v3h-3zM249 72h3v3h-3zM0 75h3v3h-3zM12 75h3v3h-3zM33 75h3v3h-3zM42 75h3v3h-3zM51 75h3v3h-3zM60 75h3v3h-3zM81 75h3v3h-3zM87 75h3v3h-3zM141 75h3v3h-3zM150 75h3v3h-3zM165 75h3v3h-3zM186 75h3v3h-3zM192 75h3v3h-3zM3 78h3v3h-3zM12 78h3v3h-3zM36 78h3v3h-3zM54 78h3v3h-3zM75 78h3v3h-3zM174 78h3v3h-3zM198 78h3v3h-3zM204 78h3v3h-3zM231 78h3v3h-3zM237 78h3v3h-3zM0 81h3v3h-3zM78 81h3v3h-3zM108 81h3v3h-3zM111 81h3v3h-3zM141 81h3v3h-3zM183 81h3v3h-3zM186 81h3v3h-3zM219 81h3v3h-3zM231 81h3v3h-3zM234 81h3v3h-3zM246 81h3v3h-3zM0 84h3v3h-3zM6 84h3v3h-3zM9 84h3v3h-3zM15 84h3v3h-3zM18 84h3v3h-3zM27 84h3v3h-3zM48 84h3v3h-3zM180 84h3v3h-3zM210 84h3v3h-3zM255 84h3v3h-3zM33 87h3v3h-3zM60 87h3v3h-3zM87 87h3v3h-3zM96 87h3v3h-3zM114 87h3v3h-3zM117 87h3v3h-3zM135 87h3v3h-3zM192 87h3v3h-3zM246 87h3v3h-3zM252 87h3v3h-3zM264 87h3v3h-3zM267 87h3v3h-3zM12 90h3v3h-3zM15 90h3v3h-3zM18 90h3v3h-3zM63 90h3v3h-3zM75 90h3v3h-3zM135 90h3v3h-3zM141 90h3v3h-3zM192 90h3v3h-3zM219 90h3v3h-3zM225 90h3v3h-3zM228 90h3v3h-3zM237 90h3v3h-3zM18 93h3v3h-3zM30 93h3v3h-3zM45 93h3v3h-3zM63 93h3v3h-3zM66 93h3v3h-3zM72 93h3v3h-3zM78 93h3v3h-3zM111 93h3v3h-3zM150 93h3v3h-3zM186 93h3v3h-3zM198 93h3v3h-3zM201 93h3v3h-3zM213 93h3v3h-3zM246 93h3v3h-3zM252 93h3v3h-3zM6 96h3v3h-3zM12 96h3v3h-3zM18 96h3v3h-3zM21 96h3v3h-3zM30 96h3v3h-3zM33 96h3v3h-3zM45 96h3v3h-3zM48 96h3v3h-3zM57 96h3v3h-3zM78 96h3v3h-3zM93 96h3v3h-3zM105 96h3v3h-3zM123 96h3v3h-3zM141 96h3v3h-3zM174 96h3v3h-3zM216 96h3v3h-3zM225 96h3v3h-3zM231 96h3v3h-3zM12 99h3v3h-3zM15 99h3v3h-3zM18 99h3v3h-3zM33 99h3v3h-3zM75 99h3v3h-3zM93 99h3v3h-3zM114 99h3v3h-3zM117 99h3v3h-3zM120 99h3v3h-3zM141 99h3v3h-3zM147 99h3v3h-3zM153 99h3v3h-3zM159 99h3v3h-3zM165 99h3v3h-3zM177 99h3v3h-3zM216 99h3v3h-3zM234 99h3v3h-3zM237 99h3v3h-3zM15 102h3v3h-3zM21 102h3v3h-3zM27 102h3v3h-3zM30 102h3v3h-3zM57 102h3v3h-3zM66 102h3v3h-3zM69 102h3v3h-3zM78 102h3v3h-3zM93 102h3v3h-3zM102 102h3v3h-3zM108 102h3v3h-3zM111 102h3v3h-3zM129 102h3v3h-3zM150 102h3v3h-3zM174 102h3v3h-3zM180 102h3v3h-3zM225 102h3v3h-3zM228 102h3v3h-3zM258 102h3v3h-3zM60 105h3v3h-3zM75 105h3v3h-3zM78 105h3v3h-3zM87 105h3v3h-3zM123 105h3v3h-3zM138 105h3v3h-3zM141 105h3v3h-3zM150 105h3v3h-3zM162 105h3v3h-3zM186 105h3v3h-3zM192 105h3v3h-3zM198 105h3v3h-3zM201 105h3v3h-3zM207 105h3v3h-3zM237 105h3v3h-3zM264 105h3v3h-3zM267 105h3v3h-3zM0 108h3v3h-3zM36 108h3v3h-3zM42 108h3v3h-3zM48 108h3v3h-3zM81 108h3v3h-3zM84 108h3v3h-3zM96 108h3v3h-3zM108 108h3v3h-3zM132 108h3v3h-3zM150 108h3v3h-3zM195 108h3v3h-3zM198 108h3v3h-3zM207 108h3v3h-3zM210 108h3v3h-3zM222 108h3v3h-3zM234 108h3v3h-3zM249 108h3v3h-3zM252 108h3v3h-3zM267 108h3v3h-3zM57 111h3v3h-3zM84 111h3v3h-3zM105 111h3v3h-3zM120 111h3v3h-3zM123 111h3v3h-3zM141 111h3v3h-3zM159 111h3v3h-3zM168 111h3v3h-3zM171 111h3v3h-3zM177 111h3v3h-3zM192 111h3v3h-3zM195 111h3v3h-3zM249 111h3v3h-3zM264 111h3v3h-3zM12 114h3v3h-3zM30 114h3v3h-3zM48 114h3v3h-3zM57 114h3v3h-3zM66 114h3v3h-3zM75 114h3v3h-3zM84 114h3v3h-3zM96 114h3v3h-3zM150 114h3v3h-3zM153 114h3v3h-3zM165 114h3v3h-3zM183 114h3v3h-3zM222 114h3v3h-3zM255 114h3v3h-3zM267 114h3v3h-3zM0 117h3v3h-3zM33 117h3v3h-3zM60 117h3v3h-3zM63 117h3v3h-3zM90 117h3v3h-3zM111 117h3v3h-3zM117 117h3v3h-3zM147 117h3v3h-3zM165 117h3v3h-3zM198 117h3v3h-3zM219 117h3v3h-3zM228 117h3v3h-3zM255 117h3v3h-3zM9 120h3v3h-3zM36 120h3v3h-3zM39 120h3v3h-3zM54 120h3v3h-3zM66 120h3v3h-3zM84 120h3v3h-3zM126 120h3v3h-3zM132 120h3v3h-3zM135 120h3v3h-3zM141 120h3v3h-3zM150 120h3v3h-3zM156 120h3v3h-3zM171 120h3v3h-3zM177 120h3v3h-3zM189 120h3v3h-3zM234 120h3v3h-3zM249 120h3v3h-3zM255 120h3v3h-3zM6 123h3v3h-3zM9 123h3v3h-3zM33 123h3v3h-3zM36 123h3v3h-3zM45 123h3v3h-3zM66 123h3v3h-3zM81 123h3v3h-3zM90 123h3v3h-3zM96 123h3v3h-3zM105 123h3v3h-3zM123 123h3v3h-3zM129 123h3v3h-3zM153 123h3v3h-3zM186 123h3v3h-3zM195 123h3v3h-3zM198 123h3v3h-3zM228 123h3v3h-3zM231 123h3v3h-3zM234 123h3v3h-3zM246 123h3v3h-3zM252 123h3v3h-3zM255 123h3v3h-3zM0 126h3v3h-3zM6 126h3v3h-3zM12 126h3v3h-3zM45 126h3v3h-3zM84 126h3v3h-3zM96 126h3v3h-3zM102 126h3v3h-3zM108 126h3v3h-3zM129 126h3v3h-3zM141 126h3v3h-3zM147 126h3v3h-3zM150 126h3v3h-3zM153 126h3v3h-3zM159 126h3v3h-3zM174 126h3v3h-3zM192 126h3v3h-3zM213 126h3v3h-3zM231 126h3v3h-3zM234 126h3v3h-3zM243 126h3v3h-3zM246 126h3v3h-3zM36 129h3v3h-3zM39 129h3v3h-3zM48 129h3v3h-3zM54 129h3v3h-3zM114 129h3v3h-3zM150 129h3v3h-3zM180 129h3v3h-3zM195 129h3v3h-3zM15 132h3v3h-3zM18 132h3v3h-3zM54 132h3v3h-3zM102 132h3v3h-3zM108 132h3v3h-3zM138 132h3v3h-3zM174 132h3v3h-3zM186 132h3v3h-3zM6 135h3v3h-3zM12 135h3v3h-3zM15 135h3v3h-3zM24 135h3v3h-3zM36 135h3v3h-3zM42 135h3v3h-3zM45 135h3v3h-3zM81 135h3v3h-3zM105 135h3v3h-3zM150 135h3v3h-3zM156 135h3v3h-3zM159 135h3v3h-3zM162 135h3v3h-3zM180 135h3v3h-3zM213 135h3v3h-3zM216 135h3v3h-3zM255 135h3v3h-3zM12 138h3v3h-3zM21 138h3v3h-3zM54 138h3v3h-3zM75 138h3v3h-3zM81 138h3v3h-3zM87 138h3v3h-3zM90 138h3v3h-3zM102 138h3v3h-3zM111 138h3v3h-3zM117 138h3v3h-3zM147 138h3v3h-3zM201 138h3v3h-3zM21 141h3v3h-3zM33 141h3v3h-3zM48 141h3v3h-3zM54 141h3v3h-3zM78 141h3v3h-3zM96 141h3v3h-3zM102 141h3v3h-3zM147 141h3v3h-3zM186 141h3v3h-3zM192 141h3v3h-3zM195 141h3v3h-3zM243 141h3v3h-3zM264 141h3v3h-3zM33 144h3v3h-3zM45 144h3v3h-3zM51 144h3v3h-3zM66 144h3v3h-3zM111 144h3v3h-3zM129 144h3v3h-3zM132 144h3v3h-3zM147 144h3v3h-3zM150 144h3v3h-3zM159 144h3v3h-3zM162 144h3v3h-3zM168 144h3v3h-3zM171 144h3v3h-3zM192 144h3v3h-3zM204 144h3v3h-3zM213 144h3v3h-3zM216 144h3v3h-3zM252 144h3v3h-3zM258 144h3v3h-3zM12 147h3v3h-3zM15 147h3v3h-3zM18 147h3v3h-3zM39 147h3v3h-3zM72 147h3v3h-3zM111 147h3v3h-3zM135 147h3v3h-3zM168 147h3v3h-3zM207 147h3v3h-3zM246 147h3v3h-3zM258 147h3v3h-3zM6 150h3v3h-3zM15 150h3v3h-3zM18 150h3v3h-3zM33 150h3v3h-3zM51 150h3v3h-3zM63 150h3v3h-3zM78 150h3v3h-3zM93 150h3v3h-3zM144 150h3v3h-3zM192 150h3v3h-3zM207 150h3v3h-3zM225 150h3v3h-3zM231 150h3v3h-3zM234 150h3v3h-3zM246 150h3v3h-3zM261 150h3v3h-3zM51 153h3v3h-3zM57 153h3v3h-3zM81 153h3v3h-3zM84 153h3v3h-3zM93 153h3v3h-3zM111 153h3v3h-3zM120 153h3v3h-3zM132 153h3v3h-3zM135 153h3v3h-3zM138 153h3v3h-3zM153 153h3v3h-3zM174 153h3v3h-3zM177 153h3v3h-3zM189 153h3v3h-3zM195 153h3v3h-3zM198 153h3v3h-3zM219 153h3v3h-3zM234 153h3v3h-3zM255 153h3v3h-3zM261 153h3v3h-3zM264 153h3v3h-3zM15 156h3v3h-3zM33 156h3v3h-3zM45 156h3v3h-3zM66 156h3v3h-3zM78 156h3v3h-3zM117 156h3v3h-3zM120 156h3v3h-3zM126 156h3v3h-3zM135 156h3v3h-3zM144 156h3v3h-3zM156 156h3v3h-3zM162 156h3v3h-3zM210 156h3v3h-3zM9 159h3v3h-3zM27 159h3v3h-3zM36 159h3v3h-3zM75 159h3v3h-3zM111 159h3v3h-3zM141 159h3v3h-3zM159 159h3v3h-3zM174 159h3v3h-3zM177 159h3v3h-3zM186 159h3v3h-3zM204 159h3v3h-3zM225 159h3v3h-3zM228 159h3v3h-3zM237 159h3v3h-3zM255 159h3v3h-3zM267 159h3v3h-3zM0 162h3v3h-3zM15 162h3v3h-3zM30 162h3v3h-3zM54 162h3v3h-3zM60 162h3v3h-3zM75 162h3v3h-3zM81 162h3v3h-3zM90 162h3v3h-3zM99 162h3v3h-3zM105 162h3v3h-3zM111 162h3v3h-3zM177 162h3v3h-3zM198 162h3v3h-3zM219 162h3v3h-3zM240 162h3v3h-3zM243 162h3v3h-3zM252 162h3v3h-3zM258 162h3v3h-3zM6 165h3v3h-3zM42 165h3v3h-3zM69 165h3v3h-3zM87 165h3v3h-3zM129 165h3v3h-3zM135 165h3v3h-3zM147 165h3v3h-3zM159 165h3v3h-3zM168 165h3v3h-3zM192 165h3v3h-3zM210 165h3v3h-3zM246 165h3v3h-3zM258 165h3v3h-3zM9 168h3v3h-3zM63 168h3v3h-3zM72 168h3v3h-3zM84 168h3v3h-3zM102 168h3v3h-3zM105 168h3v3h-3zM126 168h3v3h-3zM150 168h3v3h-3zM171 168h3v3h-3zM186 168h3v3h-3zM207 168h3v3h-3zM210 168h3v3h-3zM252 168h3v3h-3zM3 171h3v3h-3zM9 171h3v3h-3zM45 171h3v3h-3zM90 171h3v3h-3zM93 171h3v3h-3zM117 171h3v3h-3zM123 171h3v3h-3zM126 171h3v3h-3zM129 171h3v3h-3zM141 171h3v3h-3zM144 171h3v3h-3zM156 171h3v3h-3zM165 171h3v3h-3zM168 171h3v3h-3zM219 171h3v3h-3zM249 171h3v3h-3zM261 171h3v3h-3zM15 174h3v3h-3zM57 174h3v3h-3zM60 174h3v3h-3zM81 174h3v3h-3zM90 174h3v3h-3zM105 174h3v3h-3zM135 174h3v3h-3zM141 174h3v3h-3zM159 174h3v3h-3zM171 174h3v3h-3zM183 174h3v3h-3zM186 174h3v3h-3zM216 174h3v3h-3zM249 174h3v3h-3zM69 177h3v3h-3zM75 177h3v3h-3zM120 177h3v3h-3zM150 177h3v3h-3zM177 177h3v3h-3zM219 177h3v3h-3zM51 180h3v3h-3zM111 180h3v3h-3zM120 180h3v3h-3zM165 180h3v3h-3zM168 180h3v3h-3zM195 180h3v3h-3zM210 180h3v3h-3zM228 180h3v3h-3zM234 180h3v3h-3zM252 180h3v3h-3zM264 180h3v3h-3zM42 183h3v3h-3zM69 183h3v3h-3zM75 183h3v3h-3zM90 183h3v3h-3zM111 183h3v3h-3zM141 183h3v3h-3zM159 183h3v3h-3zM219 183h3v3h-3zM225 183h3v3h-3zM243 183h3v3h-3zM246 183h3v3h-3zM33 186h3v3h-3zM51 186h3v3h-3zM60 186h3v3h-3zM63 186h3v3h-3zM117 186h3v3h-3zM180 186h3v3h-3zM186 186h3v3h-3zM192 186h3v3h-3zM219 186h3v3h-3zM222 186h3v3h-3zM39 189h3v3h-3zM57 189h3v3h-3zM66 189h3v3h-3zM75 189h3v3h-3zM87 189h3v3h-3zM102 189h3v3h-3zM108 189h3v3h-3zM120 189h3v3h-3zM138 189h3v3h-3zM147 189h3v3h-3zM159 189h3v3h-3zM189 189h3v3h-3zM201 189h3v3h-3zM213 189h3v3h-3zM228 189h3v3h-3zM267 189h3v3h-3zM0 192h3v3h-3zM6 192h3v3h-3zM18 192h3v3h-3zM24 192h3v3h-3zM42 192h3v3h-3zM45 192h3v3h-3zM111 192h3v3h-3zM129 192h3v3h-3zM156 192h3v3h-3zM174 192h3v3h-3zM195 192h3v3h-3zM222 192h3v3h-3zM228 192h3v3h-3zM246 192h3v3h-3zM261 192h3v3h-3zM39 195h3v3h-3zM54 195h3v3h-3zM75 195h3v3h-3zM111 195h3v3h-3zM117 195h3v3h-3zM222 195h3v3h-3zM237 195h3v3h-3zM246 195h3v3h-3zM258 195h3v3h-3zM261 195h3v3h-3zM42 198h3v3h-3zM54 198h3v3h-3zM60 198h3v3h-3zM87 198h3v3h-3zM90 198h3v3h-3zM93 198h3v3h-3zM96 198h3v3h-3zM105 198h3v3h-3zM126 198h3v3h-3zM186 198h3v3h-3zM192 198h3v3h-3zM240 198h3v3h-3zM246 198h3v3h-3zM267 198h3v3h-3zM3 201h3v3h-3zM9 201h3v3h-3zM15 201h3v3h-3zM39 201h3v3h-3zM42 201h3v3h-3zM57 201h3v3h-3zM60 201h3v3h-3zM69 201h3v3h-3zM84 201h3v3h-3zM102 201h3v3h-3zM108 201h3v3h-3zM120 201h3v3h-3zM123 201h3v3h-3zM141 201h3v3h-3zM147 201h3v3h-3zM162 201h3v3h-3zM261 201h3v3h-3zM27 204h3v3h-3zM57 204h3v3h-3zM69 204h3v3h-3zM105 204h3v3h-3zM111 204h3v3h-3zM120 204h3v3h-3zM141 204h3v3h-3zM147 204h3v3h-3zM186 204h3v3h-3zM207 204h3v3h-3zM216 204h3v3h-3zM249 204h3v3h-3zM252 204h3v3h-3zM264 204h3v3h-3zM3 207h3v3h-3zM24 207h3v3h-3zM30 207h3v3h-3zM57 207h3v3h-3zM63 207h3v3h-3zM66 207h3v3h-3zM81 207h3v3h-3zM138 207h3v3h-3zM141 207h3v3h-3zM162 207h3v3h-3zM168 207h3v3h-3zM204 207h3v3h-3zM213 207h3v3h-3zM30 210h3v3h-3zM48 210h3v3h-3zM63 210h3v3h-3zM66 210h3v3h-3zM84 210h3v3h-3zM96 210h3v3h-3zM117 210h3v3h-3zM120 210h3v3h-3zM132 210h3v3h-3zM138 210h3v3h-3zM144 210h3v3h-3zM165 210h3v3h-3zM180 210h3v3h-3zM183 210h3v3h-3zM186 210h3v3h-3zM189 210h3v3h-3zM222 210h3v3h-3zM255 210h3v3h-3zM261 210h3v3h-3zM18 213h3v3h-3zM24 213h3v3h-3zM102 213h3v3h-3zM156 213h3v3h-3zM159 213h3v3h-3zM177 213h3v3h-3zM192 213h3v3h-3zM228 213h3v3h-3zM264 213h3v3h-3zM267 213h3v3h-3zM30 216h3v3h-3zM36 216h3v3h-3zM39 216h3v3h-3zM45 216h3v3h-3zM48 216h3v3h-3zM72 216h3v3h-3zM111 216h3v3h-3zM129 216h3v3h-3zM165 216h3v3h-3zM180 216h3v3h-3zM228 216h3v3h-3zM234 216h3v3h-3zM261 216h3v3h-3zM0 219h3v3h-3zM9 219h3v3h-3zM69 219h3v3h-3zM72 219h3v3h-3zM75 219h3v3h-3zM81 219h3v3h-3zM105 219h3v3h-3zM111 219h3v3h-3zM114 219h3v3h-3zM156 219h3v3h-3zM180 219h3v3h-3zM195 219h3v3h-3zM204 219h3v3h-3zM213 219h3v3h-3zM264 219h3v3h-3zM3 222h3v3h-3zM18 222h3v3h-3zM24 222h3v3h-3zM30 222h3v3h-3zM42 222h3v3h-3zM63 222h3v3h-3zM81 222h3v3h-3zM84 222h3v3h-3zM123 222h3v3h-3zM132 222h3v3h-3zM195 222h3v3h-3zM213 222h3v3h-3zM231 222h3v3h-3zM258 222h3v3h-3zM12 225h3v3h-3zM81 225h3v3h-3zM114 225h3v3h-3zM117 225h3v3h-3zM120 225h3v3h-3zM138 225h3v3h-3zM150 225h3v3h-3zM168 225h3v3h-3zM171 225h3v3h-3zM183 225h3v3h-3zM189 225h3v3h-3zM195 225h3v3h-3zM249 225h3v3h-3zM267 225h3v3h-3zM48 228h3v3h-3zM54 228h3v3h-3zM63 228h3v3h-3zM81 228h3v3h-3zM114 228h3v3h-3zM120 228h3v3h-3zM135 228h3v3h-3zM138 228h3v3h-3zM162 228h3v3h-3zM171 228h3v3h-3zM192 228h3v3h-3zM213 228h3v3h-3zM222 228h3v3h-3zM225 228h3v3h-3zM231 228h3v3h-3zM243 228h3v3h-3zM252 228h3v3h-3zM0 231h3v3h-3zM36 231h3v3h-3zM39 231h3v3h-3zM114 231h3v3h-3zM123 231h3v3h-3zM147 231h3v3h-3zM156 231h3v3h-3zM174 231h3v3h-3zM216 231h3v3h-3zM237 231h3v3h-3zM243 231h3v3h-3zM264 231h3v3h-3zM9 234h3v3h-3zM18 234h3v3h-3zM36 234h3v3h-3zM39 234h3v3h-3zM54 234h3v3h-3zM63 234h3v3h-3zM66 234h3v3h-3zM81 234h3v3h-3zM84 234h3v3h-3zM144 234h3v3h-3zM150 234h3v3h-3zM162 234h3v3h-3zM192 234h3v3h-3zM207 234h3v3h-3zM252 234h3v3h-3zM9 237h3v3h-3zM24 237h3v3h-3zM63 237h3v3h-3zM69 237h3v3h-3zM90 237h3v3h-3zM99 237h3v3h-3zM120 237h3v3h-3zM138 237h3v3h-3zM141 237h3v3h-3zM240 237h3v3h-3zM258 237h3v3h-3zM21 240h3v3h-3zM39 240h3v3h-3zM42 240h3v3h-3zM45 240h3v3h-3zM54 240h3v3h-3zM60 240h3v3h-3zM93 240h3v3h-3zM111 240h3v3h-3zM174 240h3v3h-3zM195 240h3v3h-3zM213 240h3v3h-3zM219 240h3v3h-3zM237 240h3v3h-3zM252 240h3v3h-3zM3 243h3v3h-3zM9 243h3v3h-3zM24 243h3v3h-3zM33 243h3v3h-3zM45 243h3v3h-3zM60 243h3v3h-3zM63 243h3v3h-3zM66 243h3v3h-3zM87 243h3v3h-3zM90 243h3v3h-3zM99 243h3v3h-3zM150 243h3v3h-3zM207 243h3v3h-3zM213 243h3v3h-3zM237 243h3v3h-3zM252 243h3v3h-3zM267 243h3v3h-3zM24 246h3v3h-3zM36 246h3v3h-3zM39 246h3v3h-3zM69 246h3v3h-3zM108 246h3v3h-3zM129 246h3v3h-3zM159 246h3v3h-3zM213 246h3v3h-3zM252 246h3v3h-3zM255 246h3v3h-3zM15 249h3v3h-3zM27 249h3v3h-3zM51 249h3v3h-3zM57 249h3v3h-3zM66 249h3v3h-3zM75 249h3v3h-3zM81 249h3v3h-3zM87 249h3v3h-3zM93 249h3v3h-3zM105 249h3v3h-3zM117 249h3v3h-3zM168 249h3v3h-3zM180 249h3v3h-3zM186 249h3v3h-3zM195 249h3v3h-3zM201 249h3v3h-3zM3 252h3v3h-3zM12 252h3v3h-3zM54 252h3v3h-3zM96 252h3v3h-3zM99 252h3v3h-3zM111 252h3v3h-3zM117 252h3v3h-3zM126 252h3v3h-3zM147 252h3v3h-3zM150 252h3v3h-3zM156 252h3v3h-3zM165 252h3v3h-3zM225 252h3v3h-3zM6 255h3v3h-3zM27 255h3v3h-3zM36 255h3v3h-3zM39 255h3v3h-3zM42 255h3v3h-3zM54 255h3v3h-3zM57 255h3v3h-3zM60 255h3v3h-3zM84 255h3v3h-3zM102 255h3v3h-3zM144 255h3v3h-3zM198 255h3v3h-3zM222 255h3v3h-3zM264 255h3v3h-3zM33 258h3v3h-3zM36 258h3v3h-3zM39 258h3v3h-3zM57 258h3v3h-3zM99 258h3v3h-3zM135 258h3v3h-3zM150 258h3v3h-3zM156 258h3v3h-3zM162 258h3v3h-3zM174 258h3v3h-3zM180 258h3v3h-3zM198 258h3v3h-3zM216 258h3v3h-3zM228 258h3v3h-3zM261 258h3v3h-3zM6 261h3v3h-3zM27 261h3v3h-3zM42 261h3v3h-3zM45 261h3v3h-3zM63 261h3v3h-3zM78 261h3v3h-3zM108 261h3v3h-3zM117 261h3v3h-3zM120 261h3v3h-3zM141 261h3v3h-3zM186 261h3v3h-3zM198 261h3v3h-3zM204 261h3v3h-3zM222 261h3v3h-3zM228 261h3v3h-3zM234 261h3v3h-3zM240 261h3v3h-3zM261 261h3v3h-3zM9 264h3v3h-3zM18 264h3v3h-3zM39 264h3v3h-3zM69 264h3v3h-3zM99 264h3v3h-3zM120 264h3v3h-3zM129 264h3v3h-3zM195 264h3v3h-3zM201 264h3v3h-3zM213 264h3v3h-3zM219 264h3v3h-3zM234 264h3v3h-3zM237 264h3v3h-3zM264 264h3v3h-3zM15 267h3v3h-3zM87 267h3v3h-3zM96 267h3v3h-3zM117 267h3v3h-3zM123 267h3v3h-3zM135 267h3v3h-3zM144 267h3v3h-3zM180 267h3v3h-3zM183 267h3v3h-3zM201 267h3v3h-3zM204 267h3v3h-3zM228 267h3v3h-3zM264 267h3v3h-3z"/></pattern></defs><rect x="1689" y="103" width="1353" height="19" fill="#e50000"/><rect x="1689" y="122" width="1353" height="29" fill="#fff"/><rect x="1689" y="151" width="1353" height="30" fill="#000"/><rect x="1689" y="181" width="1353" height="818" fill="url(#pb)"/><polygon points="2043,248 2148,248 2148,181 2886,181 2890,194 2906,194 2906,214 2923,214 2923,250 3021,290 3021,594 2979,626 2945,681 2931,720 2902,753 2875,786 2856,819 2843,852 2823,885 2810,918 2793,951 2780,999 1971,999 1971,360 1972,327 1978,305 1989,282 2009,260" fill="url(#pr)"/><polygon points="2924,248 2990,252 3019,290 3019,335 2960,335 2924,300" fill="url(#pc)"/><path fill="#e50000" d="M30 0h3v3h-3zM39 0h3v3h-3zM51 0h3v3h-3zM66 0h3v3h-3zM75 0h3v3h-3zM111 0h3v3h-3zM63 3h3v3h-3zM66 3h3v3h-3zM3 6h3v3h-3zM6 6h3v3h-3zM60 6h3v3h-3zM75 6h3v3h-3zM90 6h3v3h-3zM3 9h3v3h-3zM42 9h3v3h-3zM51 9h3v3h-3zM81 9h3v3h-3zM84 9h3v3h-3zM87 9h3v3h-3zM15 12h3v3h-3zM30 12h3v3h-3zM36 12h3v3h-3zM57 12h3v3h-3zM81 12h3v3h-3zM108 12h3v3h-3zM9 15h3v3h-3zM12 15h3v3h-3zM15 15h3v3h-3zM30 15h3v3h-3zM51 15h3v3h-3zM87 15h3v3h-3zM27 18h3v3h-3zM45 18h3v3h-3zM60 18h3v3h-3zM27 21h3v3h-3zM39 21h3v3h-3zM45 21h3v3h-3zM57 21h3v3h-3zM63 21h3v3h-3zM90 21h3v3h-3zM0 24h3v3h-3zM6 24h3v3h-3zM21 24h3v3h-3zM57 24h3v3h-3zM60 24h3v3h-3zM75 24h3v3h-3zM78 24h3v3h-3zM93 24h3v3h-3zM114 24h3v3h-3zM6 27h3v3h-3zM72 27h3v3h-3zM6 30h3v3h-3zM27 30h3v3h-3zM36 30h3v3h-3zM45 30h3v3h-3zM102 30h3v3h-3zM12 33h3v3h-3zM42 33h3v3h-3zM99 33h3v3h-3zM39 36h3v3h-3zM57 36h3v3h-3zM108 36h3v3h-3zM9 39h3v3h-3zM30 39h3v3h-3zM48 39h3v3h-3zM54 39h3v3h-3zM72 39h3v3h-3zM81 39h3v3h-3zM99 39h3v3h-3zM0 42h3v3h-3zM21 42h3v3h-3zM54 42h3v3h-3zM60 42h3v3h-3zM78 42h3v3h-3zM21 45h3v3h-3zM66 48h3v3h-3zM69 48h3v3h-3zM78 48h3v3h-3zM84 48h3v3h-3zM108 48h3v3h-3zM45 51h3v3h-3zM60 51h3v3h-3zM90 51h3v3h-3zM21 54h3v3h-3zM54 54h3v3h-3zM81 54h3v3h-3zM96 54h3v3h-3zM21 57h3v3h-3zM45 57h3v3h-3zM51 57h3v3h-3zM54 57h3v3h-3zM3 60h3v3h-3zM36 60h3v3h-3zM90 60h3v3h-3zM9 63h3v3h-3zM24 63h3v3h-3zM63 63h3v3h-3zM93 63h3v3h-3z" transform="translate(2925,181)"/><polygon points="1689,999 1689,897 1700,885 1730,877 1764,880 1784,890 1789,927 1794,937 1799,927 1843,897 1878,872 1903,865 1947,865 1957,877 1963,887 1963,999" fill="url(#pr2)"/><polygon points="1971,999 1971,360 1978,305 1989,282 2009,260 2043,248 2100,248 2060,330 2040,420 2050,560 2030,700 2060,999" fill="url(#pr2)"/><polygon points="2922,793 3042,793 3042,999 2792,999 2800,967 2810,934 2830,901 2850,868 2866,852 2892,845 2885,819 2895,806" fill="url(#pw)"/><polygon points="2948,774 2972,745 2990,740 3001,740 3001,774" fill="#fff"/><rect x="2925" y="778" width="117" height="15" fill="url(#pwc)"/><polygon points="2885,819 2905,800 2925,793 2925,825 2900,845 2888,840" fill="url(#pwc)"/><rect x="1701" y="103" width="6" height="7" fill="#0000ea" /><rect x="1749" y="103" width="6" height="7" fill="#0000ea" /><rect x="1716" y="103" width="3" height="4" fill="#0000ea" /><rect x="1725" y="103" width="3" height="4" fill="#0000ea" /><rect x="1719" y="107" width="6" height="3" fill="#0000ea" /><rect x="1732" y="103" width="3" height="10" fill="#0000ea" /><rect x="1735" y="106" width="3" height="3" fill="#0000ea" /><rect x="1738" y="109" width="3" height="4" fill="#0000ea" /><rect x="1851" y="103" width="3" height="3" fill="#9a0000" /><rect x="1857" y="106" width="3" height="3" fill="#9a0000" /><rect x="1863" y="103" width="3" height="3" fill="#9a0000" /><rect x="1854" y="109" width="3" height="3" fill="#9a0000" /><rect x="1866" y="109" width="3" height="3" fill="#9a0000" /><g fill="none" stroke="#0000ea" stroke-width="3.2"><path d="M1900 128 H1911 V147 M1919 147 V128 H1932 V147 M1940 147 V128 H1953 V139 H1940 M1965 147 V128 H1980"/><path d="M2005 140 V148 M2011 134 V148 M2017 138 V148"/></g><rect x="2412" y="137" width="3" height="14" fill="#0000ea" /><rect x="2782" y="134" width="4" height="4" fill="#e50000" /><g stroke="#0000ea" stroke-width="2.4" fill="none"><path d="M1975 770 L2562 183"/><path d="M2560 183 L3019 642"/><path d="M3005 275 L2350 930"/><path d="M2965 275 L2808 432"/><path d="M2370 780 L2589 999"/><path d="M2027 937 L2089 999"/><path d="M2148 246 H2923"/><path d="M2745 535 H2958"/><path d="M2718 990 L2820 888"/><path d="M2150 823 L2190 847"/></g><rect x="2795" y="420" width="17" height="17" fill="#0000ea" /><circle cx="2833" cy="458" r="14" fill="#0000ea"/><path d="M2540 181 L2590 181 L2565 206Z" fill="url(#pc)"/><path d="M2565 212 L2590 237 L2565 258 L2540 237Z" fill="url(#pc)"/><rect x="2150" y="214" width="37" height="31" fill="url(#pb)"/><rect x="2162" y="197" width="65" height="22" fill="url(#pb)"/><text x="2166" y="240" font-family="Liberation Sans" font-size="31.9"  fill="#e50000" textLength="19" lengthAdjust="spacingAndGlyphs">TE</text><text x="2012" y="275" font-family="Liberation Sans" font-size="23.6"  fill="#0000ea" textLength="51" lengthAdjust="spacingAndGlyphs">NUI</text><text x="2171" y="296" font-family="Liberation Sans" font-size="22.2"  fill="#0000ea" textLength="61" lengthAdjust="spacingAndGlyphs">1D·2II</text><text x="2151" y="318" font-family="Liberation Sans" font-size="18.1"  fill="#0000ea" textLength="58" lengthAdjust="spacingAndGlyphs">·3I’</text><text x="2198" y="341" font-family="Liberation Sans" font-size="22.2" font-weight="bold" fill="#0000ea" textLength="15" lengthAdjust="spacingAndGlyphs">卐</text><text x="2063" y="395" font-family="Liberation Sans" font-size="31.9"  fill="#0000ea" textLength="294" lengthAdjust="spacingAndGlyphs">AYAAAAAAAAAAAA</text><text x="2068" y="433" font-family="Liberation Sans" font-size="18.1" font-weight="bold" fill="#0000ea" textLength="57" lengthAdjust="spacingAndGlyphs">ISSOU</text><text x="2293" y="496" font-family="Liberation Sans" font-size="27.8"  fill="#0000ea" textLength="48" lengthAdjust="spacingAndGlyphs">CIIF</text><text x="2042" y="539" font-family="Liberation Sans" font-size="25.0"  fill="#0000ea" textLength="28" lengthAdjust="spacingAndGlyphs">PO</text><text x="1995" y="597" font-family="Liberation Sans" font-size="22.2"  fill="#0000ea" textLength="121" lengthAdjust="spacingAndGlyphs">CIMER CHEF</text><text x="2013" y="627" font-family="Liberation Sans" font-size="29.2"  fill="#0000ea" textLength="103" lengthAdjust="spacingAndGlyphs">RAOULT</text><text x="2318" y="607" font-family="Liberation Sans" font-size="26.4"  fill="#0000ea" textLength="115" lengthAdjust="spacingAndGlyphs">MARKOW</text><text x="2139" y="368" font-family="Liberation Sans" font-size="22.2" font-weight="bold" fill="#0000ea" textLength="51" lengthAdjust="spacingAndGlyphs">JOIB</text><text x="1979" y="344" font-family="Liberation Sans" font-size="26.4"  fill="#0000ea" textLength="100" lengthAdjust="spacingAndGlyphs">CHANCLA</text><text x="2231" y="218" font-family="Liberation Sans" font-size="25.0" font-weight="bold" fill="#0000ea" textLength="298" lengthAdjust="spacingAndGlyphs">AYUCNOBSENAU MEUTRENT</text><text x="2218" y="252" font-family="Liberation Sans" font-size="22.2"  fill="#0000ea" textLength="49" lengthAdjust="spacingAndGlyphs">MTS</text><text x="2398" y="245" font-family="Liberation Sans" font-size="20.8" font-weight="bold" fill="#0000ea" textLength="78" lengthAdjust="spacingAndGlyphs">INSTA</text><text x="2621" y="215" font-family="Liberation Sans" font-size="26.4"  fill="#0000ea" textLength="163" lengthAdjust="spacingAndGlyphs">DIEUDO  NEZ</text><text x="2674" y="240" font-family="Liberation Sans" font-size="26.4" font-weight="bold" fill="#0000ea" textLength="64" lengthAdjust="spacingAndGlyphs">GUE!</text><text x="2373" y="383" font-family="Liberation Sans" font-size="38.9" font-weight="bold" fill="#0000ea" textLength="241" lengthAdjust="spacingAndGlyphs">8B5PUU BBSBBT</text><rect x="2511.5" y="410.5" width="145" height="57" fill="none" stroke="#0000ea" stroke-width="7"/><text x="2520" y="455" font-family="Liberation Sans" font-size="45.8" font-weight="bold" fill="#0000ea" textLength="128" lengthAdjust="spacingAndGlyphs" stroke="#0000ea" stroke-width="1.5">ISSOU</text><text x="2632" y="398" font-family="Liberation Sans" font-size="45.8"  fill="#0000ea" textLength="127" lengthAdjust="spacingAndGlyphs">Tdgd F</text><rect x="2660" y="362" width="3" height="78" fill="#0000ea" /><text x="2357" y="421" font-family="Liberation Sans" font-size="34.7"  fill="#0000ea" textLength="80" lengthAdjust="spacingAndGlyphs">HAAA</text><text x="2394" y="490" font-family="Liberation Sans" font-size="50.0" font-weight="bold" fill="#0000ea" textLength="103" lengthAdjust="spacingAndGlyphs" stroke="#0000ea" stroke-width="1.5">IUF</text><rect x="2589.5" y="469.5" width="99" height="25" fill="none" stroke="#0000ea" stroke-width="3"/><rect x="2573" y="470" width="15" height="26" fill="#000" /><rect x="2577" y="474" width="3" height="18" fill="#0000ea" /><rect x="2580" y="474" width="3" height="18" fill="#ffffff" /><rect x="2583" y="474" width="3" height="18" fill="#e50000" /><text x="2592" y="492" font-family="Liberation Sans" font-size="26.4"  fill="#0000ea" textLength="94" lengthAdjust="spacingAndGlyphs">FRANCE</text><text x="2710" y="490" font-family="Liberation Sans" font-size="27.8" font-weight="bold" fill="#0000ea" textLength="80" lengthAdjust="spacingAndGlyphs">STEVGH</text><text x="2648" y="635" font-family="Liberation Sans" font-size="41.7"  fill="#0000ea" textLength="157" lengthAdjust="spacingAndGlyphs">DIO2 SAY</text><text x="2532" y="724" font-family="Liberation Sans" font-size="30.6"  fill="#0000ea" textLength="66" lengthAdjust="spacingAndGlyphs">JVC</text><rect x="2674" y="690" width="57" height="34" fill="#0000ea" /><text x="2731" y="740" font-family="Liberation Sans" font-size="31.9"  fill="#0000ea" textLength="189" lengthAdjust="spacingAndGlyphs">AYAAAAA</text><text x="2456" y="678" font-family="Liberation Sans" font-size="20.8" font-weight="bold" fill="#0000ea" textLength="25" lengthAdjust="spacingAndGlyphs">60</text><text x="2512" y="810" font-family="Liberation Sans" font-size="61.1" font-weight="bold" fill="#0000ea" textLength="125" lengthAdjust="spacingAndGlyphs">18-25</text><rect x="2512" y="813" width="125" height="4" fill="#0000ea" /><text x="2436" y="888" font-family="Liberation Sans" font-size="68.1"  fill="#0000ea" textLength="328" lengthAdjust="spacingAndGlyphs">KNSOMBERSTIONS</text><text x="2525" y="967" font-family="Liberation Sans" font-size="31.9"  fill="#0000ea" textLength="92" lengthAdjust="spacingAndGlyphs">890G</text><rect x="2624" y="970" width="59" height="4" fill="#0000ea" /><text x="2184" y="960" font-family="Liberation Sans" font-size="43.1" font-weight="bold" fill="#0000ea" textLength="216" lengthAdjust="spacingAndGlyphs" stroke="#0000ea" stroke-width="3">BRRGWSTE</text><text x="1991" y="806" font-family="Liberation Sans" font-size="40.3" font-weight="bold" fill="#0000ea" textLength="112" lengthAdjust="spacingAndGlyphs" stroke="#0000ea" stroke-width="3">WSOOF</text><text x="2005" y="833" font-family="Liberation Sans" font-size="25.0" font-weight="bold" fill="#0000ea" textLength="101" lengthAdjust="spacingAndGlyphs">RSA '100</text><text x="2184" y="878" font-family="Liberation Sans" font-size="34.7" font-weight="bold" fill="#0000ea" textLength="45" lengthAdjust="spacingAndGlyphs">PL</text><text x="2871" y="355" font-family="Liberation Sans" font-size="27.8" font-weight="bold" fill="#0000ea" textLength="56" lengthAdjust="spacingAndGlyphs">VOTE</text><rect x="2951" y="363" width="34" height="31" fill="#0000ea" /><text x="2941" y="501" font-family="Liberation Sans" font-size="18.1"  fill="#0000ea" textLength="44" lengthAdjust="spacingAndGlyphs">ACUE</text><text x="2849" y="643" font-family="Liberation Sans" font-size="23.6" font-weight="bold" fill="#0000ea" textLength="111" lengthAdjust="spacingAndGlyphs">PDxxxxR</text><text x="2892" y="670" font-family="Liberation Sans" font-size="27.8" font-weight="bold" fill="#0000ea" textLength="60" lengthAdjust="spacingAndGlyphs">Y2i</text><rect x="2873" y="691" width="68" height="14" fill="#0000ea" /><text x="2596" y="283" font-family="Liberation Sans" font-size="19.4"  fill="#0000ea" textLength="29" lengthAdjust="spacingAndGlyphs">W</text><text x="2603" y="304" font-family="Liberation Sans" font-size="19.4"  fill="#0000ea" textLength="19" lengthAdjust="spacingAndGlyphs">L</text><text x="2596" y="325" font-family="Liberation Sans" font-size="19.4"  fill="#0000ea" textLength="29" lengthAdjust="spacingAndGlyphs">IM</text><text x="2628" y="276" font-family="Liberation Sans" font-size="25.0" font-weight="bold" fill="#0000ea" textLength="57" lengthAdjust="spacingAndGlyphs">QARTI</text><path d="M2430 318 L2467 330 L2460 348 L2440 348Z" fill="#0000ea"/><text x="2500" y="348" font-family="Liberation Sans" font-size="41.7" font-weight="bold" fill="#0000ea" textLength="22" lengthAdjust="spacingAndGlyphs">↓</text><circle cx="2249" cy="353" r="13" fill="none" stroke="#0000ea" stroke-width="3"/><path d="M2208 393 L2279 464 M2220 393 L2279 452 M2208 410 L2262 464 M2215 440 L2260 395" stroke="#0000ea" stroke-width="3" fill="none"/><text x="1982" y="375" font-family="Liberation Sans" font-size="27.8" font-weight="bold" fill="#0000ea" textLength="30" lengthAdjust="spacingAndGlyphs">回</text><path d="M1985 420 L2010 405 L2040 420 L2060 440 L2085 470 L2110 500 M2010 405 L2020 390 L2050 392 M2040 420 L2000 450 L1980 455 M2060 440 L2075 420" stroke="#0000ea" stroke-width="3" fill="none"/><path d="M2137 490 V520 H2155 M2170 485 H2200 V515" stroke="#0000ea" stroke-width="3" fill="none"/><rect x="2006" y="492" width="11" height="29" fill="#0000ea" /><text x="2090" y="520" font-family="Liberation Sans" font-size="25.0" font-weight="bold" fill="#0000ea" textLength="22" lengthAdjust="spacingAndGlyphs">58</text><text x="2145" y="570" font-family="Liberation Sans" font-size="19.4" font-weight="bold" fill="#0000ea" textLength="70" lengthAdjust="spacingAndGlyphs">rJ3OK3I</text><text x="2004" y="672" font-family="Liberation Sans" font-size="31.9"  fill="#0000ea" textLength="23" lengthAdjust="spacingAndGlyphs">CA</text><text x="1977" y="904" font-family="Liberation Sans" font-size="23.6"  fill="#0000ea" textLength="40" lengthAdjust="spacingAndGlyphs">MU</text><text x="1977" y="729" font-family="Liberation Sans" font-size="20.8"  fill="#0000ea" textLength="30" lengthAdjust="spacingAndGlyphs">10P</text><rect x="2022" y="711" width="14" height="15" fill="#0000ea" /><rect x="2051" y="711" width="15" height="15" fill="#0000ea" /><rect x="2022" y="746" width="14" height="15" fill="#0000ea" /><rect x="2051" y="746" width="15" height="15" fill="#0000ea" /><path d="M2061 695 L2075 679 L2080 690 L2091 695 L2085 709 L2066 709Z" fill="#0000ea"/><path d="M2300 680 H2292 V741 H2300 M2292 680 H2328 M2308 680 V736 M2302 700 H2315 M2302 718 H2315 M2320 600 V640 M2316 640 H2347 V660 H2316Z" stroke="#0000ea" stroke-width="3" fill="none"/><rect x="2233" y="763" width="9" height="12" fill="#0000ea" /><circle cx="2270" cy="773" r="7" fill="#0000ea"/><path d="M2322 763 Q2316 772 2322 781 M2125 830 V845 L2112 857 M2125 845 L2139 857 M2118 840 H2132" stroke="#0000ea" stroke-width="3" fill="none"/><rect x="2327" y="864" width="18" height="20" fill="#0000ea" /><path d="M2110 680 H2120 V692" stroke="#0000ea" stroke-width="3" fill="none"/><rect x="2375" y="577" width="86" height="3" fill="#02be01" /><rect x="2461" y="571" width="128" height="14" fill="url(#pg)"/><rect x="2589" y="571" width="428" height="14" fill="#02be01" /><rect x="2600" y="575" width="3" height="3" fill="#0000ea" /><rect x="2640" y="575" width="3" height="3" fill="#0000ea" /><rect x="2668" y="575" width="3" height="3" fill="#0000ea" /><rect x="2700" y="575" width="3" height="3" fill="#0000ea" /><rect x="2733" y="575" width="3" height="3" fill="#0000ea" /><rect x="2760" y="575" width="3" height="3" fill="#0000ea" /><rect x="2790" y="575" width="3" height="3" fill="#0000ea" /><rect x="2840" y="575" width="3" height="3" fill="#0000ea" /><rect x="2880" y="575" width="3" height="3" fill="#0000ea" /><rect x="2920" y="575" width="3" height="3" fill="#0000ea" /><rect x="2950" y="575" width="3" height="3" fill="#0000ea" /><rect x="2990" y="575" width="3" height="3" fill="#0000ea" /><rect x="2887" y="570" width="3" height="16" fill="#ffffff" /><text x="2530" y="528" font-family="Liberation Sans" font-size="25.0"  fill="#0000ea" textLength="170" lengthAdjust="spacingAndGlyphs">IUAPVSEMOR2</text><text x="2715" y="528" font-family="Liberation Sans" font-size="25.0"  fill="#3aa83a" textLength="45" lengthAdjust="spacingAndGlyphs">DUR</text><rect x="2560" y="505" width="3" height="3" fill="#02be01" /><rect x="2590" y="530" width="3" height="3" fill="#02be01" /><rect x="2640" y="512" width="3" height="3" fill="#02be01" /><rect x="2668" y="520" width="3" height="3" fill="#02be01" /><rect x="2700" y="540" width="3" height="3" fill="#02be01" /><rect x="2620" y="545" width="3" height="3" fill="#02be01" /><rect x="2580" y="548" width="3" height="3" fill="#02be01" /><rect x="2745" y="505" width="3" height="3" fill="#02be01" /><rect x="2690" y="505" width="3" height="3" fill="#02be01" /><rect x="2688" y="512" width="6" height="14" fill="#e0c000" /><text x="2781" y="512" font-family="Liberation Sans" font-size="47.2"  fill="#0000ea" textLength="51" lengthAdjust="spacingAndGlyphs">VIAE</text><text x="2829" y="524" font-family="Liberation Sans" font-size="19.4" font-weight="bold" fill="#0000ea" textLength="24" lengthAdjust="spacingAndGlyphs">51</text><path d="M2790 520 L2810 540 M2850 470 L2870 450 M2900 520 L2960 533" stroke="#0000ea" stroke-width="3" fill="none"/><text x="2613" y="548" font-family="Liberation Sans" font-size="20.8"  fill="#3a3ad0" textLength="77" lengthAdjust="spacingAndGlyphs">WHETHIT</text><text x="2613" y="564" font-family="Liberation Sans" font-size="20.8"  fill="#3a3ad0" textLength="77" lengthAdjust="spacingAndGlyphs">BREKING!</text><text x="2270" y="218" font-family="Liberation Sans" font-size="25.0" font-weight="bold" fill="#02be01" textLength="60" lengthAdjust="spacingAndGlyphs">NCNO</text><rect x="2979" y="951" width="45" height="48" fill="#0000ea" /><rect x="2920" y="883" width="79" height="8" fill="#0000ea" /><rect x="2909.5" y="828.5" width="12" height="19" fill="none" stroke="#0000ea" stroke-width="3"/><text x="2869" y="877" font-family="Liberation Sans" font-size="20.8" font-weight="bold" fill="#7a5a30" textLength="43" lengthAdjust="spacingAndGlyphs">LE2</text><path d="M2839 969 L2905 901 H2951 V921 L2889 966 Z M2920 816 H3042 M2971 837 H3042" stroke="#0000ea" stroke-width="2.5" fill="none"/><path d="M2935 810 L2950 820 H2965 L2975 810" stroke="#0000ea" stroke-width="3" fill="none"/><rect x="3014" y="748" width="23" height="26" fill="#0000ea" /><text x="3017" y="772" font-family="Liberation Sans" font-size="27.8" font-weight="bold" fill="#ffffff" textLength="18" lengthAdjust="spacingAndGlyphs">2</text><rect x="3039" y="740" width="3" height="259" fill="#0000ea" /><rect x="2176" y="531" width="3" height="3" fill="#ffffff" /><rect x="2226" y="528" width="3" height="3" fill="#ffffff" /><rect x="2284" y="528" width="3" height="3" fill="#ffffff" /><rect x="2327" y="528" width="3" height="3" fill="#ffffff" /><rect x="2313" y="549" width="3" height="3" fill="#ffffff" /><rect x="2329" y="555" width="3" height="3" fill="#ffffff" /><rect x="2316" y="565" width="3" height="3" fill="#ffffff" /><rect x="2254" y="572" width="3" height="3" fill="#ffffff" /><rect x="2260" y="586" width="3" height="3" fill="#ffffff" /><rect x="2251" y="595" width="3" height="3" fill="#ffffff" /><rect x="2267" y="602" width="3" height="3" fill="#ffffff" /><rect x="2279" y="594" width="3" height="3" fill="#ffffff" /><rect x="2150" y="622" width="3" height="3" fill="#ffffff" /><rect x="2127" y="570" width="3" height="3" fill="#ffffff" /><rect x="2162" y="581" width="3" height="3" fill="#ffffff" /><rect x="2357" y="418" width="3" height="3" fill="#ffffff" /><rect x="2382" y="422" width="3" height="3" fill="#ffffff" /><rect x="2394" y="400" width="3" height="3" fill="#ffffff" /><rect x="2100" y="613" width="3" height="3" fill="#ffffff" /><rect x="2359" y="423" width="3" height="3" fill="#ffffff" /><rect x="2520" y="276" width="3" height="3" fill="#ffffff" /><rect x="2548" y="283" width="3" height="3" fill="#ffffff" /><rect x="2575" y="286" width="3" height="3" fill="#ffffff" /><rect x="2508" y="304" width="3" height="3" fill="#ffffff" /><rect x="2561" y="325" width="3" height="3" fill="#ffffff" /><rect x="2384" y="322" width="3" height="3" fill="#ffffff" /><rect x="2664" y="286" width="3" height="3" fill="#ffffff" /><rect x="2657" y="293" width="3" height="3" fill="#ffffff" /><rect x="2582" y="407" width="3" height="3" fill="#ffffff" /><rect x="2532" y="425" width="3" height="3" fill="#ffffff" /><rect x="2628" y="416" width="3" height="3" fill="#ffffff" /><rect x="2589" y="425" width="3" height="3" fill="#ffffff" /><rect x="2577" y="464" width="3" height="3" fill="#ffffff" /><rect x="2593" y="464" width="3" height="3" fill="#ffffff" /><rect x="2635" y="462" width="3" height="3" fill="#ffffff" /><rect x="2793" y="370" width="3" height="3" fill="#ffffff" /></svg><div class="a" style="left:1713px;top:127px;width:56px;height:56px;background:rgba(222,222,222,0.82);border:1px solid #222;box-sizing:border-box"></div><div class="a" style="left:1775px;top:127px;width:56px;height:56px;background:rgba(222,222,222,0.82);border:1px solid #222;box-sizing:border-box"></div><div class="a" style="left:1836px;top:127px;width:56px;height:56px;background:rgba(222,222,222,0.82);border:1px solid #222;box-sizing:border-box"></div><svg class="a" style="left:1733px;top:151px" width="16" height="12"><path d="M2 2 L8 8 L14 2" fill="none" stroke="#111" stroke-width="2"/></svg><svg class="a" style="left:1791px;top:144px" width="25" height="25"><circle cx="12.5" cy="12.5" r="11.5" fill="#111"/><g fill="none" stroke="#c8c8c8" stroke-width="1.3"><ellipse cx="12.5" cy="12.5" rx="5" ry="11.5"/><line x1="1" y1="8.5" x2="24" y2="8.5"/><line x1="1" y1="16.5" x2="24" y2="16.5"/></g><g fill="none" stroke="#b0b0b0" stroke-width="1.3"><line x1="12.5" y1="1" x2="12.5" y2="24"/></g></svg><svg class="a" style="left:1850px;top:143px" width="28" height="28"><path d="M15.5 2 A11 11 0 0 1 24 11.5" fill="none" stroke="#111" stroke-width="1.5"/><path d="M14 0 L18.5 2.5 L14.5 5Z" fill="#111"/><path d="M12.5 24 A11 11 0 0 1 3 13.5" fill="none" stroke="#111" stroke-width="1.5"/><path d="M14 26 L9.5 23.5 L13.5 21Z" fill="#111"/><text x="7.5" y="17" font-family="Liberation Sans" font-size="9.5" font-weight="bold" fill="#111">3D</text></svg>
</body></html>
